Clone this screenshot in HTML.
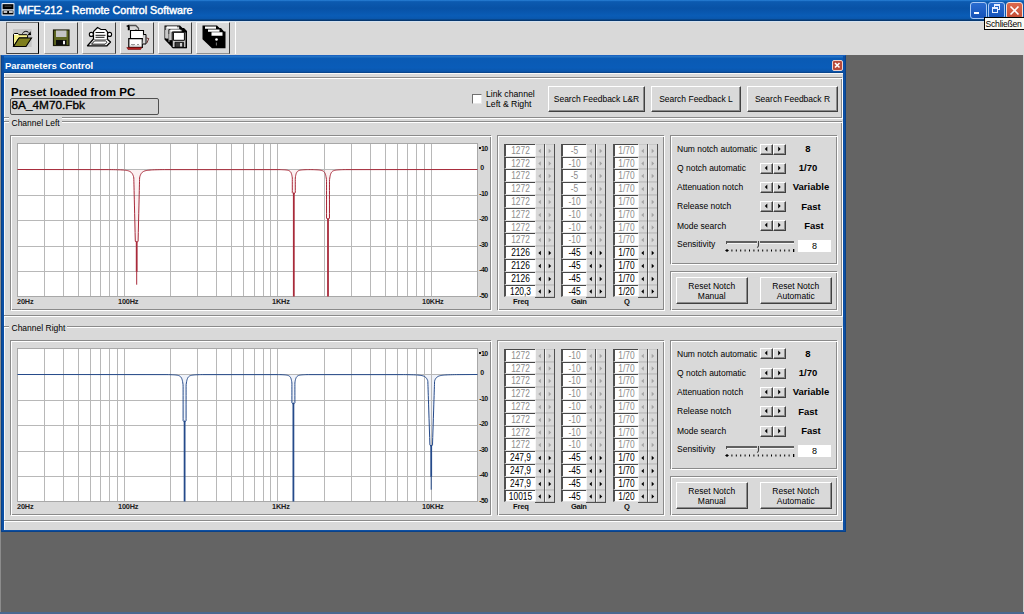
<!DOCTYPE html><html><head><meta charset="utf-8"><style>
html,body{margin:0;padding:0}
body{width:1024px;height:614px;position:relative;overflow:hidden;background:#646464;font-family:"Liberation Sans",sans-serif}
div{position:absolute}
.t{white-space:nowrap;line-height:1}
</style></head><body>
<div style="position:absolute;left:0px;top:0px;width:1024px;height:21px;background:linear-gradient(to bottom,#2a82d8 0%,#0c5ab0 8%,#0852a6 40%,#0a5cb6 75%,#0a58ae 88%,#063060 100%)"></div>
<div style="position:absolute;left:0px;top:21px;width:1024px;height:1px;background:#d4e2f0"></div>
<svg style="position:absolute;left:0px;top:0px" width="17" height="18"><rect x="1.5" y="3" width="13" height="12.8" rx="1" fill="#dce6f2"/><rect x="2.6" y="4.2" width="10.8" height="5" fill="#000"/><rect x="4.5" y="5.6" width="7" height="1.3" fill="#3a3a3a"/><rect x="2.6" y="10.6" width="10.8" height="3.8" fill="#000"/><rect x="3.6" y="11.2" width="3.6" height="1.6" fill="#f0f0f0"/><rect x="9" y="11.2" width="3.8" height="1.6" fill="#f0f0f0"/></svg>
<div class="t" style="left:18px;top:5.2px;font-size:10.75px;font-weight:normal;color:#fff;-webkit-text-stroke:0.45px #fff">MFE-212 - Remote Control Software</div>
<div style="position:absolute;left:970px;top:2px;width:17px;height:17px;background:linear-gradient(to bottom,#2a6cd0,#1452b8);border:1px solid #a8c8f4;border-radius:3px;box-sizing:border-box"></div>
<div style="position:absolute;left:974px;top:12px;width:5px;height:2px;background:#fff"></div>
<div style="position:absolute;left:988px;top:2px;width:17px;height:17px;background:linear-gradient(to bottom,#2a6cd0,#1452b8);border:1px solid #a8c8f4;border-radius:3px;box-sizing:border-box"></div>
<div style="position:absolute;left:994px;top:4px;width:6px;height:6px;border:1px solid #e8f0ff;border-top-width:2px;box-sizing:border-box"></div>
<div style="position:absolute;left:992px;top:7px;width:6px;height:6px;border:1px solid #e8f0ff;border-top-width:2px;box-sizing:border-box;background:#1c5cc0"></div>
<div style="position:absolute;left:1006px;top:2px;width:17px;height:17px;background:linear-gradient(to bottom,#dc6a4e,#c44c34);border:1px solid #f4e0d8;border-radius:3px;box-sizing:border-box"></div>
<svg style="position:absolute;left:1006px;top:2px" width="17" height="17"><path d="M4.5 4.5L12.5 12.5M12.5 4.5L4.5 12.5" stroke="#fff" stroke-width="1.6"/></svg>
<div style="position:absolute;left:0px;top:22px;width:1024px;height:33px;background:#d9d9d9"></div>
<div style="position:absolute;left:6px;top:22px;width:33px;height:32px;border-left:1px solid #707070;border-top:1px solid #707070;border-right:1px solid #000;border-bottom:1px solid #404040;box-sizing:border-box;background:#dcdcdc"></div>
<div style="position:absolute;left:44px;top:22px;width:34px;height:32px;border-left:1px solid #fff;border-top:1px solid #f4f4f4;border-right:1.5px solid #404040;border-bottom:1px solid #909090;box-sizing:border-box"></div>
<div style="position:absolute;left:82px;top:22px;width:34px;height:32px;border-left:1px solid #fff;border-top:1px solid #f4f4f4;border-right:1.5px solid #404040;border-bottom:1px solid #909090;box-sizing:border-box"></div>
<div style="position:absolute;left:120px;top:22px;width:34px;height:32px;border-left:1px solid #fff;border-top:1px solid #f4f4f4;border-right:1.5px solid #404040;border-bottom:1px solid #909090;box-sizing:border-box"></div>
<div style="position:absolute;left:158px;top:22px;width:34px;height:32px;border-left:1px solid #fff;border-top:1px solid #f4f4f4;border-right:1.5px solid #404040;border-bottom:1px solid #909090;box-sizing:border-box"></div>
<div style="position:absolute;left:196px;top:22px;width:34px;height:32px;border-left:1px solid #fff;border-top:1px solid #f4f4f4;border-right:1.5px solid #404040;border-bottom:1px solid #909090;box-sizing:border-box"></div>
<div style="position:absolute;left:235px;top:22px;width:6px;height:32px;border-left:1px solid #fff;box-sizing:border-box"></div>
<svg style="position:absolute;left:8px;top:24px" width="32" height="30" viewBox="0 0 32 30"><rect x="5" y="5" width="18.7" height="18" fill="#c6c6c6"/><path d="M5.5 22.5V10.3l1-0.8h3.5l1 1.2h7.8l0.8 1v2.2H11z" fill="#f6f08a" stroke="#000" stroke-width="1"/><path d="M5.5 22.5l5.5-8.5h12.5l-5.5 8.5z" fill="#7e7e1e" stroke="#000" stroke-width="1.1"/><path d="M6 10.5h4" stroke="#fff" stroke-width="1"/><path d="M14.2 9.6q3-3.8 6.3-1.3" fill="none" stroke="#000" stroke-width="1"/><path d="M19.3 11.3l3.8-0.2l-0.6-3.9z" fill="#000"/></svg>
<svg style="position:absolute;left:48px;top:24px" width="32" height="30" viewBox="0 0 32 30"><rect x="5.5" y="6" width="15.5" height="15.5" fill="#5e6620" stroke="#1a1a0a" stroke-width="1.2"/><rect x="8" y="6.5" width="10.5" height="6.5" fill="#c4c4c4"/><rect x="8" y="16" width="10.5" height="5" fill="#0c0c0c"/><rect x="15" y="16.8" width="2" height="3.5" fill="#f0f0f0"/></svg>
<svg style="position:absolute;left:84px;top:24px" width="32" height="30" viewBox="0 0 32 30"><path d="M3.5 21.8L9.5 15h13.5l3.5 3l-3.5 3.8z" fill="#fff" stroke="#000" stroke-width="1.3" stroke-linejoin="round"/><path d="M7.5 20.2l3-3.3h11l1.5 1.4l-1.8 1.9z" fill="none" stroke="#000" stroke-width="0.9"/><path d="M9.5 15.5V7.5l4-4l3.5 2h4.5l2 2.5v7.5" fill="#fff" stroke="#000" stroke-width="1.2"/><circle cx="7.3" cy="10.4" r="2" fill="#fff" stroke="#000" stroke-width="1.1"/><circle cx="25.6" cy="10.4" r="2" fill="#fff" stroke="#000" stroke-width="1.1"/><path d="M11.5 8.5h9M11.5 11.3h10M11.5 13.3h9" stroke="#000" stroke-width="0.9"/></svg>
<svg style="position:absolute;left:122px;top:22px" width="32" height="30" viewBox="0 0 32 30"><path d="M4 4l2.5-1.2h1.2v5.5H5.8V5z" fill="#000"/><path d="M7.5 3.5h6.3l2.7 2.7v3" fill="none" stroke="#505050" stroke-width="1.3"/><path d="M13 8.3q2-1 2 0.6t-1.5 1.2" fill="none" stroke="#000" stroke-width="0.9"/><path d="M8.5 8.5h13v8.5h-13z" fill="#fff" stroke="#000" stroke-width="1.1"/><path d="M6.8 16.7h13.5v8.6H6.8z" fill="#fff" stroke="#000" stroke-width="1.2"/><path d="M21.3 12.5h2.7v9.5h-3.5" fill="#d8d8d8" stroke="#000" stroke-width="1"/><path d="M24.5 16l2.3 0.6l-2 4.5" fill="none" stroke="#602020" stroke-width="0.9"/><path d="M9 23.5l1-1.5 1 1.5 1-1.5 1 1.5M15 23.5l1-1.5 1 1.5" fill="none" stroke="#707070" stroke-width="0.8"/><path d="M4.8 25.5h15l-1.2 2H6z" fill="#b42020" stroke="#701010" stroke-width="0.6"/></svg>
<svg style="position:absolute;left:160px;top:22px" width="32" height="30" viewBox="0 0 32 30"><path d="M4.5 3.5h15.5l2.5 2.5h1.5l3 3v17.3h-14l-8.5-8.8z" fill="#000"/><path d="M5.6 4.6h13.6v12H5.6z" fill="#c8c8c8"/><path d="M7 4.4h10v2H7z" fill="#fff"/><path d="M8.8 7.6h13.3v11H8.8z" fill="#c8c8c8" stroke="#000" stroke-width="0.8"/><path d="M10.4 7.5h10v2h-10z" fill="#fff"/><path d="M12.2 10h13.8v15.6H12.2z" fill="#cacaca" stroke="#000" stroke-width="1"/><path d="M13.4 10.3h11v8h-11z" fill="#fff" stroke="#000" stroke-width="1"/><path d="M15 20.3h8.6v5H15z" fill="#3a3a3a" stroke="#000" stroke-width="0.8"/><path d="M20 21h2v3.5h-2z" fill="#d0d0d0"/><path d="M5.5 8v8M9 12v8" stroke="#fff" stroke-width="0.8" opacity="0.7"/></svg>
<svg style="position:absolute;left:198px;top:22px" width="32" height="30" viewBox="0 0 32 30"><path d="M4.5 3.5h14.5l2.5 2.5h1.5l3 3.5h1.5v16.8h-13.5l-9.5-9z" fill="#000"/><path d="M7 4.6h11v2.2H7zM10 7.5h11.5v2.3H10zM13.5 10.2h11v3.6h-11z" fill="#fff"/><circle cx="18.5" cy="17.5" r="1.3" fill="#fff"/><path d="M18.4 20.5v3" stroke="#aaa" stroke-width="0.7"/></svg>
<div style="position:absolute;left:0px;top:55px;width:1.3px;height:557px;background:#8c8c8c"></div>
<div style="position:absolute;left:1022.6px;top:55px;width:1.4px;height:557px;background:#d0d0d0"></div>
<div style="position:absolute;left:0px;top:611.7px;width:1024px;height:2.3px;background:#4a6890"></div>
<div style="position:absolute;left:1px;top:55px;width:845px;height:477px;background:#0c4fa4;border:1px solid #0a4288;border-top-color:#1a62c0;box-sizing:border-box"></div>
<div style="position:absolute;left:4px;top:56px;width:839px;height:17px;background:linear-gradient(to bottom,#2a78c8 0%,#0a5ab4 15%,#0a5cb8 70%,#0a56ac 90%,#083e80 100%)"></div>
<div class="t" style="left:5px;top:60.5px;font-size:9.5px;font-weight:bold;color:#fff;">Parameters Control</div>
<div style="position:absolute;left:832px;top:60px;width:10.5px;height:10.5px;background:#b84a3a;border:1px solid #ecd4d0;border-radius:2px;box-sizing:border-box"></div>
<svg style="position:absolute;left:832px;top:60px" width="11" height="11"><path d="M3 3L7.5 7.5M7.5 3L3 7.5" stroke="#fff" stroke-width="1.6"/></svg>
<div style="position:absolute;left:4px;top:73px;width:839px;height:457px;background:#d9d9d9;border-top:1px solid #f8f8f8;border-left:1px solid #f8f8f8;box-sizing:border-box"></div>
<div style="position:absolute;left:4px;top:77px;width:838px;height:41px;border:1px solid #8a8a8a;border-left:none;box-sizing:border-box"></div>
<div style="position:absolute;left:4px;top:78px;width:839px;height:41px;border:1px solid #fff;border-left:none;box-sizing:border-box"></div>
<div class="t" style="left:11px;top:86px;font-size:11.6px;font-weight:bold;color:#000;">Preset loaded from PC</div>
<div style="position:absolute;left:10px;top:98px;width:149px;height:17px;border:1px solid #505050;border-radius:2px;box-sizing:border-box;background:#d4d4d4"></div>
<div class="t" style="left:11.5px;top:99.8px;font-size:11.8px;font-weight:normal;color:#000;-webkit-text-stroke:0.35px #000">8A_4M70.Fbk</div>
<div style="position:absolute;left:472px;top:94px;width:10px;height:10px;background:#fff;border-top:1px solid #707070;border-left:1px solid #707070;border-bottom:1px solid #e8e8e8;border-right:1px solid #e8e8e8;box-sizing:border-box"></div>
<div class="t" style="left:486px;top:89.5px;font-size:8.7px;font-weight:normal;color:#000;">Link channel</div>
<div class="t" style="left:486px;top:99.5px;font-size:8.7px;font-weight:normal;color:#000;">Left &amp; Right</div>
<div style="position:absolute;left:548px;top:86px;width:97px;height:26px;background:#d9d9d9;border-top:1px solid #fff;border-left:1px solid #fff;border-right:1px solid #404040;border-bottom:1px solid #404040;box-sizing:border-box"><div style="position:absolute;left:0;top:0;right:0;bottom:0;border-right:1px solid #8c8c8c;border-bottom:1px solid #8c8c8c"></div></div>
<div class="t" style="left:548px;top:94.5px;width:97px;text-align:center;font-size:8.5px">Search Feedback L&amp;R</div>
<div style="position:absolute;left:651px;top:86px;width:90px;height:26px;background:#d9d9d9;border-top:1px solid #fff;border-left:1px solid #fff;border-right:1px solid #404040;border-bottom:1px solid #404040;box-sizing:border-box"><div style="position:absolute;left:0;top:0;right:0;bottom:0;border-right:1px solid #8c8c8c;border-bottom:1px solid #8c8c8c"></div></div>
<div class="t" style="left:651px;top:94.5px;width:90px;text-align:center;font-size:8.5px">Search Feedback L</div>
<div style="position:absolute;left:747px;top:86px;width:91px;height:26px;background:#d9d9d9;border-top:1px solid #fff;border-left:1px solid #fff;border-right:1px solid #404040;border-bottom:1px solid #404040;box-sizing:border-box"><div style="position:absolute;left:0;top:0;right:0;bottom:0;border-right:1px solid #8c8c8c;border-bottom:1px solid #8c8c8c"></div></div>
<div class="t" style="left:747px;top:94.5px;width:91px;text-align:center;font-size:8.5px">Search Feedback R</div>
<div style="position:absolute;left:4px;top:121px;width:838px;height:195px;border:1px solid #8a8a8a;border-left:none;box-sizing:border-box"></div>
<div style="position:absolute;left:4px;top:122px;width:839px;height:195px;border:1px solid #fff;border-left:none;box-sizing:border-box"></div>
<div style="position:absolute;left:9px;top:116px;width:53px;height:10px;background:#d9d9d9"></div>
<div class="t" style="left:11.5px;top:118.5px;font-size:8.5px;font-weight:normal;color:#000;">Channel Left</div>
<div style="position:absolute;left:10px;top:135px;width:481px;height:175px;border:1px solid #8a8a8a;box-sizing:border-box"></div>
<div style="position:absolute;left:11px;top:136px;width:481px;height:175px;border:1px solid #fff;box-sizing:border-box"></div>
<svg style="position:absolute;left:17px;top:143px" width="461" height="154"><rect x="0" y="0" width="461" height="154" fill="#fff"/><polygon points="293.34,26.63 294.89,26.65 296.30,26.68 297.60,26.72 298.78,26.77 299.85,26.82 300.84,26.88 301.74,26.96 302.57,27.05 303.32,27.16 304.01,27.29 304.64,27.45 305.22,27.64 305.75,27.87 306.24,28.14 306.69,28.47 307.10,28.87 307.48,29.34 307.83,29.91 308.15,30.59 308.45,31.41 308.73,32.39 308.98,33.57 309.22,34.98 309.45,36.68 309.50,38.71 309.50,41.15 309.50,44.08 309.50,47.60 309.50,51.82 309.50,56.88 309.50,62.96 309.50,70.25 309.50,75.14 311.00,76.64 312.50,75.14 312.50,70.25 312.50,62.96 312.50,56.88 312.50,51.82 312.50,47.60 312.50,44.08 312.50,41.15 312.50,38.71 312.55,36.68 312.78,34.98 313.02,33.57 313.27,32.39 313.55,31.41 313.85,30.59 314.17,29.91 314.52,29.34 314.90,28.87 315.31,28.47 315.76,28.14 316.25,27.87 316.78,27.64 317.36,27.45 317.99,27.29 318.68,27.16 319.43,27.05 320.26,26.96 321.16,26.88 322.15,26.82 323.22,26.77 324.40,26.72 325.70,26.68 327.11,26.65 328.66,26.63" fill="#fcf0f1" stroke="none"/><polygon points="261.93,26.63 263.23,26.65 264.43,26.68 265.51,26.72 266.51,26.77 267.41,26.82 268.24,26.88 269.00,26.96 269.70,27.05 270.33,27.16 270.91,27.29 271.45,27.45 271.93,27.64 272.38,27.87 272.79,28.14 273.17,28.47 273.51,28.87 273.83,29.34 274.13,29.91 274.40,30.59 274.65,31.41 274.89,32.39 275.10,33.57 275.30,34.98 275.30,36.68 275.30,38.71 275.30,41.15 275.30,44.08 275.30,47.60 275.30,49.54 276.80,51.04 278.30,49.54 278.30,47.60 278.30,44.08 278.30,41.15 278.30,38.71 278.30,36.68 278.30,34.98 278.50,33.57 278.71,32.39 278.95,31.41 279.20,30.59 279.47,29.91 279.77,29.34 280.09,28.87 280.43,28.47 280.81,28.14 281.22,27.87 281.67,27.64 282.15,27.45 282.69,27.29 283.27,27.16 283.90,27.05 284.60,26.96 285.36,26.88 286.19,26.82 287.09,26.77 288.09,26.72 289.17,26.68 290.37,26.65 291.67,26.63" fill="#fcf0f1" stroke="none"/><polygon points="91.82,26.63 94.26,26.65 96.50,26.68 98.54,26.72 100.40,26.77 102.10,26.82 103.66,26.88 105.08,26.96 106.38,27.05 107.57,27.16 108.66,27.29 109.66,27.45 110.58,27.64 111.41,27.87 112.18,28.14 112.89,28.47 113.54,28.87 114.14,29.34 114.69,29.91 115.20,30.59 115.67,31.41 116.11,32.39 116.52,33.57 116.80,34.98 116.84,36.68 116.89,38.71 116.95,41.15 117.02,44.08 117.10,47.60 117.20,51.82 117.32,56.88 117.46,62.96 117.64,70.25 117.85,79.00 118.09,89.50 118.30,98.18 119.70,99.68 121.10,98.18 121.31,89.50 121.55,79.00 121.76,70.25 121.94,62.96 122.08,56.88 122.20,51.82 122.30,47.60 122.38,44.08 122.45,41.15 122.51,38.71 122.56,36.68 122.60,34.98 122.88,33.57 123.29,32.39 123.73,31.41 124.20,30.59 124.71,29.91 125.26,29.34 125.86,28.87 126.51,28.47 127.22,28.14 127.99,27.87 128.82,27.64 129.74,27.45 130.74,27.29 131.83,27.16 133.02,27.05 134.32,26.96 135.74,26.88 137.30,26.82 139.00,26.77 140.86,26.72 142.90,26.68 145.14,26.65 147.58,26.63" fill="#fcf0f1" stroke="none"/><line x1="27.5" y1="0" x2="27.5" y2="154" stroke="#b8b8b8" stroke-width="1"/><line x1="46.5" y1="0" x2="46.5" y2="154" stroke="#b8b8b8" stroke-width="1"/><line x1="61.5" y1="0" x2="61.5" y2="154" stroke="#b8b8b8" stroke-width="1"/><line x1="73.5" y1="0" x2="73.5" y2="154" stroke="#b8b8b8" stroke-width="1"/><line x1="83.5" y1="0" x2="83.5" y2="154" stroke="#b8b8b8" stroke-width="1"/><line x1="92.5" y1="0" x2="92.5" y2="154" stroke="#b8b8b8" stroke-width="1"/><line x1="100.5" y1="0" x2="100.5" y2="154" stroke="#b8b8b8" stroke-width="1"/><line x1="107.5" y1="0" x2="107.5" y2="154" stroke="#b8b8b8" stroke-width="1"/><line x1="153.5" y1="0" x2="153.5" y2="154" stroke="#b8b8b8" stroke-width="1"/><line x1="180.5" y1="0" x2="180.5" y2="154" stroke="#b8b8b8" stroke-width="1"/><line x1="199.5" y1="0" x2="199.5" y2="154" stroke="#b8b8b8" stroke-width="1"/><line x1="214.5" y1="0" x2="214.5" y2="154" stroke="#b8b8b8" stroke-width="1"/><line x1="226.5" y1="0" x2="226.5" y2="154" stroke="#b8b8b8" stroke-width="1"/><line x1="237.5" y1="0" x2="237.5" y2="154" stroke="#b8b8b8" stroke-width="1"/><line x1="246.5" y1="0" x2="246.5" y2="154" stroke="#b8b8b8" stroke-width="1"/><line x1="253.5" y1="0" x2="253.5" y2="154" stroke="#b8b8b8" stroke-width="1"/><line x1="260.5" y1="0" x2="260.5" y2="154" stroke="#b8b8b8" stroke-width="1"/><line x1="307.5" y1="0" x2="307.5" y2="154" stroke="#b8b8b8" stroke-width="1"/><line x1="334.5" y1="0" x2="334.5" y2="154" stroke="#b8b8b8" stroke-width="1"/><line x1="353.5" y1="0" x2="353.5" y2="154" stroke="#b8b8b8" stroke-width="1"/><line x1="368.5" y1="0" x2="368.5" y2="154" stroke="#b8b8b8" stroke-width="1"/><line x1="380.5" y1="0" x2="380.5" y2="154" stroke="#b8b8b8" stroke-width="1"/><line x1="390.5" y1="0" x2="390.5" y2="154" stroke="#b8b8b8" stroke-width="1"/><line x1="399.5" y1="0" x2="399.5" y2="154" stroke="#b8b8b8" stroke-width="1"/><line x1="407.5" y1="0" x2="407.5" y2="154" stroke="#b8b8b8" stroke-width="1"/><line x1="414.5" y1="0" x2="414.5" y2="154" stroke="#b8b8b8" stroke-width="1"/><line x1="0" y1="52.5" x2="461" y2="52.5" stroke="#b8b8b8" stroke-width="1"/><line x1="0" y1="77.5" x2="461" y2="77.5" stroke="#b8b8b8" stroke-width="1"/><line x1="0" y1="103.5" x2="461" y2="103.5" stroke="#b8b8b8" stroke-width="1"/><line x1="0" y1="128.5" x2="461" y2="128.5" stroke="#b8b8b8" stroke-width="1"/><line x1="0" y1="26.5" x2="461" y2="26.5" stroke="#b8b8b8" stroke-width="1"/><rect x="0.5" y="0.5" width="460" height="153" fill="none" stroke="#a8a8a8"/><polyline points="0.5,26.5 91.82,26.63 94.26,26.65 96.50,26.68 98.54,26.72 100.40,26.77 102.10,26.82 103.66,26.88 105.08,26.96 106.38,27.05 107.57,27.16 108.66,27.29 109.66,27.45 110.58,27.64 111.41,27.87 112.18,28.14 112.89,28.47 113.54,28.87 114.14,29.34 114.69,29.91 115.20,30.59 115.67,31.41 116.11,32.39 116.52,33.57 116.80,34.98 116.84,36.68 116.89,38.71 116.95,41.15 117.02,44.08 117.10,47.60 117.20,51.82 117.32,56.88 117.46,62.96 117.64,70.25 117.85,79.00 118.09,89.50 118.30,98.18 119.70,99.68 121.10,98.18 121.31,89.50 121.55,79.00 121.76,70.25 121.94,62.96 122.08,56.88 122.20,51.82 122.30,47.60 122.38,44.08 122.45,41.15 122.51,38.71 122.56,36.68 122.60,34.98 122.88,33.57 123.29,32.39 123.73,31.41 124.20,30.59 124.71,29.91 125.26,29.34 125.86,28.87 126.51,28.47 127.22,28.14 127.99,27.87 128.82,27.64 129.74,27.45 130.74,27.29 131.83,27.16 133.02,27.05 134.32,26.96 135.74,26.88 137.30,26.82 139.00,26.77 140.86,26.72 142.90,26.68 145.14,26.65 147.58,26.63 261.93,26.63 263.23,26.65 264.43,26.68 265.51,26.72 266.51,26.77 267.41,26.82 268.24,26.88 269.00,26.96 269.70,27.05 270.33,27.16 270.91,27.29 271.45,27.45 271.93,27.64 272.38,27.87 272.79,28.14 273.17,28.47 273.51,28.87 273.83,29.34 274.13,29.91 274.40,30.59 274.65,31.41 274.89,32.39 275.10,33.57 275.30,34.98 275.30,36.68 275.30,38.71 275.30,41.15 275.30,44.08 275.30,47.60 275.30,49.54 276.80,51.04 278.30,49.54 278.30,47.60 278.30,44.08 278.30,41.15 278.30,38.71 278.30,36.68 278.30,34.98 278.50,33.57 278.71,32.39 278.95,31.41 279.20,30.59 279.47,29.91 279.77,29.34 280.09,28.87 280.43,28.47 280.81,28.14 281.22,27.87 281.67,27.64 282.15,27.45 282.69,27.29 283.27,27.16 283.90,27.05 284.60,26.96 285.36,26.88 286.19,26.82 287.09,26.77 288.09,26.72 289.17,26.68 290.37,26.65 291.67,26.63 293.34,26.63 294.89,26.65 296.30,26.68 297.60,26.72 298.78,26.77 299.85,26.82 300.84,26.88 301.74,26.96 302.57,27.05 303.32,27.16 304.01,27.29 304.64,27.45 305.22,27.64 305.75,27.87 306.24,28.14 306.69,28.47 307.10,28.87 307.48,29.34 307.83,29.91 308.15,30.59 308.45,31.41 308.73,32.39 308.98,33.57 309.22,34.98 309.45,36.68 309.50,38.71 309.50,41.15 309.50,44.08 309.50,47.60 309.50,51.82 309.50,56.88 309.50,62.96 309.50,70.25 309.50,75.14 311.00,76.64 312.50,75.14 312.50,70.25 312.50,62.96 312.50,56.88 312.50,51.82 312.50,47.60 312.50,44.08 312.50,41.15 312.50,38.71 312.55,36.68 312.78,34.98 313.02,33.57 313.27,32.39 313.55,31.41 313.85,30.59 314.17,29.91 314.52,29.34 314.90,28.87 315.31,28.47 315.76,28.14 316.25,27.87 316.78,27.64 317.36,27.45 317.99,27.29 318.68,27.16 319.43,27.05 320.26,26.96 321.16,26.88 322.15,26.82 323.22,26.77 324.40,26.72 325.70,26.68 327.11,26.65 328.66,26.63 460.5,26.5" fill="none" stroke="#a82a3a" stroke-width="1"/><line x1="119.70" y1="98.18" x2="119.70" y2="128.90" stroke="#a82a3a" stroke-width="1.8"/><line x1="119.70" y1="128.90" x2="119.70" y2="141.70" stroke="#a82a3a" stroke-width="1"/><line x1="276.80" y1="49.54" x2="276.80" y2="153.50" stroke="#a82a3a" stroke-width="1.8"/><line x1="311.00" y1="75.14" x2="311.00" y2="153.50" stroke="#a82a3a" stroke-width="1.8"/></svg>
<div class="t" style="left:17px;top:298px;font-size:7.3px;font-weight:bold;color:#222;letter-spacing:-0.15px">20Hz</div>
<div class="t" style="left:118px;top:298px;font-size:7.3px;font-weight:bold;color:#222;letter-spacing:-0.15px">100Hz</div>
<div class="t" style="left:272px;top:298px;font-size:7.3px;font-weight:bold;color:#222;letter-spacing:-0.15px">1KHz</div>
<div class="t" style="left:422px;top:298px;font-size:7.3px;font-weight:bold;color:#222;letter-spacing:-0.15px">10KHz</div>
<div style="position:absolute;left:479.3px;top:147.2px;width:1.6px;height:1.6px;background:#111"></div>
<div class="t" style="left:481px;top:144.7px;font-size:7px;font-weight:bold;color:#111;letter-spacing:-0.6px">10</div>
<div class="t" style="left:480.3px;top:164px;font-size:7px;font-weight:bold;color:#111;letter-spacing:-0.6px">0</div>
<div class="t" style="left:479.2px;top:190px;font-size:7px;font-weight:bold;color:#111;letter-spacing:-0.6px">-10</div>
<div class="t" style="left:479.2px;top:215px;font-size:7px;font-weight:bold;color:#111;letter-spacing:-0.6px">-20</div>
<div class="t" style="left:479.2px;top:241px;font-size:7px;font-weight:bold;color:#111;letter-spacing:-0.6px">-30</div>
<div class="t" style="left:479.2px;top:266px;font-size:7px;font-weight:bold;color:#111;letter-spacing:-0.6px">-40</div>
<div class="t" style="left:479.2px;top:292px;font-size:7px;font-weight:bold;color:#111;letter-spacing:-0.6px">-50</div>
<div style="position:absolute;left:497px;top:135px;width:167px;height:175px;border:1px solid #8a8a8a;box-sizing:border-box"></div>
<div style="position:absolute;left:498px;top:136px;width:167px;height:175px;border:1px solid #fff;box-sizing:border-box"></div>
<div style="position:absolute;left:504px;top:144px;width:31px;height:13px;background:#fff;border-top:1.5px solid #484848;border-left:2px solid #505050;border-bottom:1px solid #e4e4e4;box-sizing:border-box"></div>
<div class="t" style="left:504.5px;top:145.5px;width:31px;text-align:center;font-size:10px;color:#8c8c8c;transform:scaleX(0.84)">1272</div>
<div style="position:absolute;left:535px;top:144px;width:9px;height:13px;background:#d9d9d9;border-top:1px solid #c8c8c8;border-left:1px solid #f6f6f6;border-bottom:1px solid #c4c4c4;box-sizing:border-box"></div>
<div style="position:absolute;left:544px;top:144px;width:1px;height:13px;background:#505050"></div>
<svg style="position:absolute;left:535px;top:144px" width="9" height="13"><path d="M5.8 4.7L3.3 7.0L5.8 9.3z" fill="#a4a4a4"/></svg>
<div style="position:absolute;left:545px;top:144px;width:9px;height:13px;background:#d9d9d9;border-top:1px solid #c8c8c8;border-left:1px solid #f6f6f6;border-bottom:1px solid #c4c4c4;box-sizing:border-box"></div>
<div style="position:absolute;left:554px;top:144px;width:1px;height:13px;background:#505050"></div>
<svg style="position:absolute;left:545px;top:144px" width="9" height="13"><path d="M3.7 4.7L6.2 7.0L3.7 9.3z" fill="#a4a4a4"/></svg>
<div style="position:absolute;left:504px;top:157px;width:31px;height:12px;background:#fff;border-top:1.5px solid #484848;border-left:2px solid #505050;border-bottom:1px solid #e4e4e4;box-sizing:border-box"></div>
<div class="t" style="left:504.5px;top:158.5px;width:31px;text-align:center;font-size:10px;color:#8c8c8c;transform:scaleX(0.84)">1272</div>
<div style="position:absolute;left:535px;top:157px;width:9px;height:12px;background:#d9d9d9;border-top:1px solid #c8c8c8;border-left:1px solid #f6f6f6;border-bottom:1px solid #c4c4c4;box-sizing:border-box"></div>
<div style="position:absolute;left:544px;top:157px;width:1px;height:12px;background:#505050"></div>
<svg style="position:absolute;left:535px;top:157px" width="9" height="12"><path d="M5.8 4.2L3.3 6.5L5.8 8.8z" fill="#a4a4a4"/></svg>
<div style="position:absolute;left:545px;top:157px;width:9px;height:12px;background:#d9d9d9;border-top:1px solid #c8c8c8;border-left:1px solid #f6f6f6;border-bottom:1px solid #c4c4c4;box-sizing:border-box"></div>
<div style="position:absolute;left:554px;top:157px;width:1px;height:12px;background:#505050"></div>
<svg style="position:absolute;left:545px;top:157px" width="9" height="12"><path d="M3.7 4.2L6.2 6.5L3.7 8.8z" fill="#a4a4a4"/></svg>
<div style="position:absolute;left:504px;top:169px;width:31px;height:13px;background:#fff;border-top:1.5px solid #484848;border-left:2px solid #505050;border-bottom:1px solid #e4e4e4;box-sizing:border-box"></div>
<div class="t" style="left:504.5px;top:170.5px;width:31px;text-align:center;font-size:10px;color:#8c8c8c;transform:scaleX(0.84)">1272</div>
<div style="position:absolute;left:535px;top:169px;width:9px;height:13px;background:#d9d9d9;border-top:1px solid #c8c8c8;border-left:1px solid #f6f6f6;border-bottom:1px solid #c4c4c4;box-sizing:border-box"></div>
<div style="position:absolute;left:544px;top:169px;width:1px;height:13px;background:#505050"></div>
<svg style="position:absolute;left:535px;top:169px" width="9" height="13"><path d="M5.8 4.7L3.3 7.0L5.8 9.3z" fill="#a4a4a4"/></svg>
<div style="position:absolute;left:545px;top:169px;width:9px;height:13px;background:#d9d9d9;border-top:1px solid #c8c8c8;border-left:1px solid #f6f6f6;border-bottom:1px solid #c4c4c4;box-sizing:border-box"></div>
<div style="position:absolute;left:554px;top:169px;width:1px;height:13px;background:#505050"></div>
<svg style="position:absolute;left:545px;top:169px" width="9" height="13"><path d="M3.7 4.7L6.2 7.0L3.7 9.3z" fill="#a4a4a4"/></svg>
<div style="position:absolute;left:504px;top:182px;width:31px;height:13px;background:#fff;border-top:1.5px solid #484848;border-left:2px solid #505050;border-bottom:1px solid #e4e4e4;box-sizing:border-box"></div>
<div class="t" style="left:504.5px;top:183.5px;width:31px;text-align:center;font-size:10px;color:#8c8c8c;transform:scaleX(0.84)">1272</div>
<div style="position:absolute;left:535px;top:182px;width:9px;height:13px;background:#d9d9d9;border-top:1px solid #c8c8c8;border-left:1px solid #f6f6f6;border-bottom:1px solid #c4c4c4;box-sizing:border-box"></div>
<div style="position:absolute;left:544px;top:182px;width:1px;height:13px;background:#505050"></div>
<svg style="position:absolute;left:535px;top:182px" width="9" height="13"><path d="M5.8 4.7L3.3 7.0L5.8 9.3z" fill="#a4a4a4"/></svg>
<div style="position:absolute;left:545px;top:182px;width:9px;height:13px;background:#d9d9d9;border-top:1px solid #c8c8c8;border-left:1px solid #f6f6f6;border-bottom:1px solid #c4c4c4;box-sizing:border-box"></div>
<div style="position:absolute;left:554px;top:182px;width:1px;height:13px;background:#505050"></div>
<svg style="position:absolute;left:545px;top:182px" width="9" height="13"><path d="M3.7 4.7L6.2 7.0L3.7 9.3z" fill="#a4a4a4"/></svg>
<div style="position:absolute;left:504px;top:195px;width:31px;height:13px;background:#fff;border-top:1.5px solid #484848;border-left:2px solid #505050;border-bottom:1px solid #e4e4e4;box-sizing:border-box"></div>
<div class="t" style="left:504.5px;top:196.5px;width:31px;text-align:center;font-size:10px;color:#8c8c8c;transform:scaleX(0.84)">1272</div>
<div style="position:absolute;left:535px;top:195px;width:9px;height:13px;background:#d9d9d9;border-top:1px solid #c8c8c8;border-left:1px solid #f6f6f6;border-bottom:1px solid #c4c4c4;box-sizing:border-box"></div>
<div style="position:absolute;left:544px;top:195px;width:1px;height:13px;background:#505050"></div>
<svg style="position:absolute;left:535px;top:195px" width="9" height="13"><path d="M5.8 4.7L3.3 7.0L5.8 9.3z" fill="#a4a4a4"/></svg>
<div style="position:absolute;left:545px;top:195px;width:9px;height:13px;background:#d9d9d9;border-top:1px solid #c8c8c8;border-left:1px solid #f6f6f6;border-bottom:1px solid #c4c4c4;box-sizing:border-box"></div>
<div style="position:absolute;left:554px;top:195px;width:1px;height:13px;background:#505050"></div>
<svg style="position:absolute;left:545px;top:195px" width="9" height="13"><path d="M3.7 4.7L6.2 7.0L3.7 9.3z" fill="#a4a4a4"/></svg>
<div style="position:absolute;left:504px;top:208px;width:31px;height:13px;background:#fff;border-top:1.5px solid #484848;border-left:2px solid #505050;border-bottom:1px solid #e4e4e4;box-sizing:border-box"></div>
<div class="t" style="left:504.5px;top:209.5px;width:31px;text-align:center;font-size:10px;color:#8c8c8c;transform:scaleX(0.84)">1272</div>
<div style="position:absolute;left:535px;top:208px;width:9px;height:13px;background:#d9d9d9;border-top:1px solid #c8c8c8;border-left:1px solid #f6f6f6;border-bottom:1px solid #c4c4c4;box-sizing:border-box"></div>
<div style="position:absolute;left:544px;top:208px;width:1px;height:13px;background:#505050"></div>
<svg style="position:absolute;left:535px;top:208px" width="9" height="13"><path d="M5.8 4.7L3.3 7.0L5.8 9.3z" fill="#a4a4a4"/></svg>
<div style="position:absolute;left:545px;top:208px;width:9px;height:13px;background:#d9d9d9;border-top:1px solid #c8c8c8;border-left:1px solid #f6f6f6;border-bottom:1px solid #c4c4c4;box-sizing:border-box"></div>
<div style="position:absolute;left:554px;top:208px;width:1px;height:13px;background:#505050"></div>
<svg style="position:absolute;left:545px;top:208px" width="9" height="13"><path d="M3.7 4.7L6.2 7.0L3.7 9.3z" fill="#a4a4a4"/></svg>
<div style="position:absolute;left:504px;top:221px;width:31px;height:12px;background:#fff;border-top:1.5px solid #484848;border-left:2px solid #505050;border-bottom:1px solid #e4e4e4;box-sizing:border-box"></div>
<div class="t" style="left:504.5px;top:222.5px;width:31px;text-align:center;font-size:10px;color:#8c8c8c;transform:scaleX(0.84)">1272</div>
<div style="position:absolute;left:535px;top:221px;width:9px;height:12px;background:#d9d9d9;border-top:1px solid #c8c8c8;border-left:1px solid #f6f6f6;border-bottom:1px solid #c4c4c4;box-sizing:border-box"></div>
<div style="position:absolute;left:544px;top:221px;width:1px;height:12px;background:#505050"></div>
<svg style="position:absolute;left:535px;top:221px" width="9" height="12"><path d="M5.8 4.2L3.3 6.5L5.8 8.8z" fill="#a4a4a4"/></svg>
<div style="position:absolute;left:545px;top:221px;width:9px;height:12px;background:#d9d9d9;border-top:1px solid #c8c8c8;border-left:1px solid #f6f6f6;border-bottom:1px solid #c4c4c4;box-sizing:border-box"></div>
<div style="position:absolute;left:554px;top:221px;width:1px;height:12px;background:#505050"></div>
<svg style="position:absolute;left:545px;top:221px" width="9" height="12"><path d="M3.7 4.2L6.2 6.5L3.7 8.8z" fill="#a4a4a4"/></svg>
<div style="position:absolute;left:504px;top:233px;width:31px;height:13px;background:#fff;border-top:1.5px solid #484848;border-left:2px solid #505050;border-bottom:1px solid #e4e4e4;box-sizing:border-box"></div>
<div class="t" style="left:504.5px;top:234.5px;width:31px;text-align:center;font-size:10px;color:#8c8c8c;transform:scaleX(0.84)">1272</div>
<div style="position:absolute;left:535px;top:233px;width:9px;height:13px;background:#d9d9d9;border-top:1px solid #c8c8c8;border-left:1px solid #f6f6f6;border-bottom:1px solid #c4c4c4;box-sizing:border-box"></div>
<div style="position:absolute;left:544px;top:233px;width:1px;height:13px;background:#505050"></div>
<svg style="position:absolute;left:535px;top:233px" width="9" height="13"><path d="M5.8 4.7L3.3 7.0L5.8 9.3z" fill="#a4a4a4"/></svg>
<div style="position:absolute;left:545px;top:233px;width:9px;height:13px;background:#d9d9d9;border-top:1px solid #c8c8c8;border-left:1px solid #f6f6f6;border-bottom:1px solid #c4c4c4;box-sizing:border-box"></div>
<div style="position:absolute;left:554px;top:233px;width:1px;height:13px;background:#505050"></div>
<svg style="position:absolute;left:545px;top:233px" width="9" height="13"><path d="M3.7 4.7L6.2 7.0L3.7 9.3z" fill="#a4a4a4"/></svg>
<div style="position:absolute;left:504px;top:246px;width:31px;height:13px;background:#fff;border-top:1.5px solid #484848;border-left:2px solid #505050;border-bottom:1px solid #e4e4e4;box-sizing:border-box"></div>
<div class="t" style="left:504.5px;top:247.5px;width:31px;text-align:center;font-size:10px;color:#000;transform:scaleX(0.84)">2126</div>
<div style="position:absolute;left:535px;top:246px;width:9px;height:13px;background:#d9d9d9;border-top:1px solid #c8c8c8;border-left:1px solid #f6f6f6;border-bottom:1px solid #c4c4c4;box-sizing:border-box"></div>
<div style="position:absolute;left:544px;top:246px;width:1px;height:13px;background:#505050"></div>
<svg style="position:absolute;left:535px;top:246px" width="9" height="13"><path d="M5.8 4.7L3.3 7.0L5.8 9.3z" fill="#000"/></svg>
<div style="position:absolute;left:545px;top:246px;width:9px;height:13px;background:#d9d9d9;border-top:1px solid #c8c8c8;border-left:1px solid #f6f6f6;border-bottom:1px solid #c4c4c4;box-sizing:border-box"></div>
<div style="position:absolute;left:554px;top:246px;width:1px;height:13px;background:#505050"></div>
<svg style="position:absolute;left:545px;top:246px" width="9" height="13"><path d="M3.7 4.7L6.2 7.0L3.7 9.3z" fill="#000"/></svg>
<div style="position:absolute;left:504px;top:259px;width:31px;height:13px;background:#fff;border-top:1.5px solid #484848;border-left:2px solid #505050;border-bottom:1px solid #e4e4e4;box-sizing:border-box"></div>
<div class="t" style="left:504.5px;top:260.5px;width:31px;text-align:center;font-size:10px;color:#000;transform:scaleX(0.84)">2126</div>
<div style="position:absolute;left:535px;top:259px;width:9px;height:13px;background:#d9d9d9;border-top:1px solid #c8c8c8;border-left:1px solid #f6f6f6;border-bottom:1px solid #c4c4c4;box-sizing:border-box"></div>
<div style="position:absolute;left:544px;top:259px;width:1px;height:13px;background:#505050"></div>
<svg style="position:absolute;left:535px;top:259px" width="9" height="13"><path d="M5.8 4.7L3.3 7.0L5.8 9.3z" fill="#000"/></svg>
<div style="position:absolute;left:545px;top:259px;width:9px;height:13px;background:#d9d9d9;border-top:1px solid #c8c8c8;border-left:1px solid #f6f6f6;border-bottom:1px solid #c4c4c4;box-sizing:border-box"></div>
<div style="position:absolute;left:554px;top:259px;width:1px;height:13px;background:#505050"></div>
<svg style="position:absolute;left:545px;top:259px" width="9" height="13"><path d="M3.7 4.7L6.2 7.0L3.7 9.3z" fill="#000"/></svg>
<div style="position:absolute;left:504px;top:272px;width:31px;height:13px;background:#fff;border-top:1.5px solid #484848;border-left:2px solid #505050;border-bottom:1px solid #e4e4e4;box-sizing:border-box"></div>
<div class="t" style="left:504.5px;top:273.5px;width:31px;text-align:center;font-size:10px;color:#000;transform:scaleX(0.84)">2126</div>
<div style="position:absolute;left:535px;top:272px;width:9px;height:13px;background:#d9d9d9;border-top:1px solid #c8c8c8;border-left:1px solid #f6f6f6;border-bottom:1px solid #c4c4c4;box-sizing:border-box"></div>
<div style="position:absolute;left:544px;top:272px;width:1px;height:13px;background:#505050"></div>
<svg style="position:absolute;left:535px;top:272px" width="9" height="13"><path d="M5.8 4.7L3.3 7.0L5.8 9.3z" fill="#000"/></svg>
<div style="position:absolute;left:545px;top:272px;width:9px;height:13px;background:#d9d9d9;border-top:1px solid #c8c8c8;border-left:1px solid #f6f6f6;border-bottom:1px solid #c4c4c4;box-sizing:border-box"></div>
<div style="position:absolute;left:554px;top:272px;width:1px;height:13px;background:#505050"></div>
<svg style="position:absolute;left:545px;top:272px" width="9" height="13"><path d="M3.7 4.7L6.2 7.0L3.7 9.3z" fill="#000"/></svg>
<div style="position:absolute;left:504px;top:285px;width:31px;height:12px;background:#fff;border-top:1.5px solid #484848;border-left:2px solid #505050;border-bottom:1px solid #e4e4e4;box-sizing:border-box"></div>
<div class="t" style="left:504.5px;top:286.5px;width:31px;text-align:center;font-size:10px;color:#000;transform:scaleX(0.84)">120,3</div>
<div style="position:absolute;left:535px;top:285px;width:9px;height:12px;background:#d9d9d9;border-top:1px solid #c8c8c8;border-left:1px solid #f6f6f6;border-bottom:1px solid #c4c4c4;box-sizing:border-box"></div>
<div style="position:absolute;left:544px;top:285px;width:1px;height:12px;background:#505050"></div>
<svg style="position:absolute;left:535px;top:285px" width="9" height="12"><path d="M5.8 4.2L3.3 6.5L5.8 8.8z" fill="#000"/></svg>
<div style="position:absolute;left:545px;top:285px;width:9px;height:12px;background:#d9d9d9;border-top:1px solid #c8c8c8;border-left:1px solid #f6f6f6;border-bottom:1px solid #c4c4c4;box-sizing:border-box"></div>
<div style="position:absolute;left:554px;top:285px;width:1px;height:12px;background:#505050"></div>
<svg style="position:absolute;left:545px;top:285px" width="9" height="12"><path d="M3.7 4.2L6.2 6.5L3.7 8.8z" fill="#000"/></svg>
<div style="position:absolute;left:535px;top:297px;width:20px;height:1px;background:#505050"></div>
<div style="position:absolute;left:561px;top:144px;width:25px;height:13px;background:#fff;border-top:1.5px solid #484848;border-left:2px solid #505050;border-bottom:1px solid #e4e4e4;box-sizing:border-box"></div>
<div class="t" style="left:561.5px;top:145.5px;width:25px;text-align:center;font-size:10px;color:#8c8c8c;transform:scaleX(0.84)">-5</div>
<div style="position:absolute;left:586px;top:144px;width:9px;height:13px;background:#d9d9d9;border-top:1px solid #c8c8c8;border-left:1px solid #f6f6f6;border-bottom:1px solid #c4c4c4;box-sizing:border-box"></div>
<div style="position:absolute;left:595px;top:144px;width:1px;height:13px;background:#505050"></div>
<svg style="position:absolute;left:586px;top:144px" width="9" height="13"><path d="M5.8 4.7L3.3 7.0L5.8 9.3z" fill="#a4a4a4"/></svg>
<div style="position:absolute;left:596px;top:144px;width:9px;height:13px;background:#d9d9d9;border-top:1px solid #c8c8c8;border-left:1px solid #f6f6f6;border-bottom:1px solid #c4c4c4;box-sizing:border-box"></div>
<div style="position:absolute;left:605px;top:144px;width:1px;height:13px;background:#505050"></div>
<svg style="position:absolute;left:596px;top:144px" width="9" height="13"><path d="M3.7 4.7L6.2 7.0L3.7 9.3z" fill="#a4a4a4"/></svg>
<div style="position:absolute;left:561px;top:157px;width:25px;height:12px;background:#fff;border-top:1.5px solid #484848;border-left:2px solid #505050;border-bottom:1px solid #e4e4e4;box-sizing:border-box"></div>
<div class="t" style="left:561.5px;top:158.5px;width:25px;text-align:center;font-size:10px;color:#8c8c8c;transform:scaleX(0.84)">-10</div>
<div style="position:absolute;left:586px;top:157px;width:9px;height:12px;background:#d9d9d9;border-top:1px solid #c8c8c8;border-left:1px solid #f6f6f6;border-bottom:1px solid #c4c4c4;box-sizing:border-box"></div>
<div style="position:absolute;left:595px;top:157px;width:1px;height:12px;background:#505050"></div>
<svg style="position:absolute;left:586px;top:157px" width="9" height="12"><path d="M5.8 4.2L3.3 6.5L5.8 8.8z" fill="#a4a4a4"/></svg>
<div style="position:absolute;left:596px;top:157px;width:9px;height:12px;background:#d9d9d9;border-top:1px solid #c8c8c8;border-left:1px solid #f6f6f6;border-bottom:1px solid #c4c4c4;box-sizing:border-box"></div>
<div style="position:absolute;left:605px;top:157px;width:1px;height:12px;background:#505050"></div>
<svg style="position:absolute;left:596px;top:157px" width="9" height="12"><path d="M3.7 4.2L6.2 6.5L3.7 8.8z" fill="#a4a4a4"/></svg>
<div style="position:absolute;left:561px;top:169px;width:25px;height:13px;background:#fff;border-top:1.5px solid #484848;border-left:2px solid #505050;border-bottom:1px solid #e4e4e4;box-sizing:border-box"></div>
<div class="t" style="left:561.5px;top:170.5px;width:25px;text-align:center;font-size:10px;color:#8c8c8c;transform:scaleX(0.84)">-5</div>
<div style="position:absolute;left:586px;top:169px;width:9px;height:13px;background:#d9d9d9;border-top:1px solid #c8c8c8;border-left:1px solid #f6f6f6;border-bottom:1px solid #c4c4c4;box-sizing:border-box"></div>
<div style="position:absolute;left:595px;top:169px;width:1px;height:13px;background:#505050"></div>
<svg style="position:absolute;left:586px;top:169px" width="9" height="13"><path d="M5.8 4.7L3.3 7.0L5.8 9.3z" fill="#a4a4a4"/></svg>
<div style="position:absolute;left:596px;top:169px;width:9px;height:13px;background:#d9d9d9;border-top:1px solid #c8c8c8;border-left:1px solid #f6f6f6;border-bottom:1px solid #c4c4c4;box-sizing:border-box"></div>
<div style="position:absolute;left:605px;top:169px;width:1px;height:13px;background:#505050"></div>
<svg style="position:absolute;left:596px;top:169px" width="9" height="13"><path d="M3.7 4.7L6.2 7.0L3.7 9.3z" fill="#a4a4a4"/></svg>
<div style="position:absolute;left:561px;top:182px;width:25px;height:13px;background:#fff;border-top:1.5px solid #484848;border-left:2px solid #505050;border-bottom:1px solid #e4e4e4;box-sizing:border-box"></div>
<div class="t" style="left:561.5px;top:183.5px;width:25px;text-align:center;font-size:10px;color:#8c8c8c;transform:scaleX(0.84)">-5</div>
<div style="position:absolute;left:586px;top:182px;width:9px;height:13px;background:#d9d9d9;border-top:1px solid #c8c8c8;border-left:1px solid #f6f6f6;border-bottom:1px solid #c4c4c4;box-sizing:border-box"></div>
<div style="position:absolute;left:595px;top:182px;width:1px;height:13px;background:#505050"></div>
<svg style="position:absolute;left:586px;top:182px" width="9" height="13"><path d="M5.8 4.7L3.3 7.0L5.8 9.3z" fill="#a4a4a4"/></svg>
<div style="position:absolute;left:596px;top:182px;width:9px;height:13px;background:#d9d9d9;border-top:1px solid #c8c8c8;border-left:1px solid #f6f6f6;border-bottom:1px solid #c4c4c4;box-sizing:border-box"></div>
<div style="position:absolute;left:605px;top:182px;width:1px;height:13px;background:#505050"></div>
<svg style="position:absolute;left:596px;top:182px" width="9" height="13"><path d="M3.7 4.7L6.2 7.0L3.7 9.3z" fill="#a4a4a4"/></svg>
<div style="position:absolute;left:561px;top:195px;width:25px;height:13px;background:#fff;border-top:1.5px solid #484848;border-left:2px solid #505050;border-bottom:1px solid #e4e4e4;box-sizing:border-box"></div>
<div class="t" style="left:561.5px;top:196.5px;width:25px;text-align:center;font-size:10px;color:#8c8c8c;transform:scaleX(0.84)">-10</div>
<div style="position:absolute;left:586px;top:195px;width:9px;height:13px;background:#d9d9d9;border-top:1px solid #c8c8c8;border-left:1px solid #f6f6f6;border-bottom:1px solid #c4c4c4;box-sizing:border-box"></div>
<div style="position:absolute;left:595px;top:195px;width:1px;height:13px;background:#505050"></div>
<svg style="position:absolute;left:586px;top:195px" width="9" height="13"><path d="M5.8 4.7L3.3 7.0L5.8 9.3z" fill="#a4a4a4"/></svg>
<div style="position:absolute;left:596px;top:195px;width:9px;height:13px;background:#d9d9d9;border-top:1px solid #c8c8c8;border-left:1px solid #f6f6f6;border-bottom:1px solid #c4c4c4;box-sizing:border-box"></div>
<div style="position:absolute;left:605px;top:195px;width:1px;height:13px;background:#505050"></div>
<svg style="position:absolute;left:596px;top:195px" width="9" height="13"><path d="M3.7 4.7L6.2 7.0L3.7 9.3z" fill="#a4a4a4"/></svg>
<div style="position:absolute;left:561px;top:208px;width:25px;height:13px;background:#fff;border-top:1.5px solid #484848;border-left:2px solid #505050;border-bottom:1px solid #e4e4e4;box-sizing:border-box"></div>
<div class="t" style="left:561.5px;top:209.5px;width:25px;text-align:center;font-size:10px;color:#8c8c8c;transform:scaleX(0.84)">-10</div>
<div style="position:absolute;left:586px;top:208px;width:9px;height:13px;background:#d9d9d9;border-top:1px solid #c8c8c8;border-left:1px solid #f6f6f6;border-bottom:1px solid #c4c4c4;box-sizing:border-box"></div>
<div style="position:absolute;left:595px;top:208px;width:1px;height:13px;background:#505050"></div>
<svg style="position:absolute;left:586px;top:208px" width="9" height="13"><path d="M5.8 4.7L3.3 7.0L5.8 9.3z" fill="#a4a4a4"/></svg>
<div style="position:absolute;left:596px;top:208px;width:9px;height:13px;background:#d9d9d9;border-top:1px solid #c8c8c8;border-left:1px solid #f6f6f6;border-bottom:1px solid #c4c4c4;box-sizing:border-box"></div>
<div style="position:absolute;left:605px;top:208px;width:1px;height:13px;background:#505050"></div>
<svg style="position:absolute;left:596px;top:208px" width="9" height="13"><path d="M3.7 4.7L6.2 7.0L3.7 9.3z" fill="#a4a4a4"/></svg>
<div style="position:absolute;left:561px;top:221px;width:25px;height:12px;background:#fff;border-top:1.5px solid #484848;border-left:2px solid #505050;border-bottom:1px solid #e4e4e4;box-sizing:border-box"></div>
<div class="t" style="left:561.5px;top:222.5px;width:25px;text-align:center;font-size:10px;color:#8c8c8c;transform:scaleX(0.84)">-10</div>
<div style="position:absolute;left:586px;top:221px;width:9px;height:12px;background:#d9d9d9;border-top:1px solid #c8c8c8;border-left:1px solid #f6f6f6;border-bottom:1px solid #c4c4c4;box-sizing:border-box"></div>
<div style="position:absolute;left:595px;top:221px;width:1px;height:12px;background:#505050"></div>
<svg style="position:absolute;left:586px;top:221px" width="9" height="12"><path d="M5.8 4.2L3.3 6.5L5.8 8.8z" fill="#a4a4a4"/></svg>
<div style="position:absolute;left:596px;top:221px;width:9px;height:12px;background:#d9d9d9;border-top:1px solid #c8c8c8;border-left:1px solid #f6f6f6;border-bottom:1px solid #c4c4c4;box-sizing:border-box"></div>
<div style="position:absolute;left:605px;top:221px;width:1px;height:12px;background:#505050"></div>
<svg style="position:absolute;left:596px;top:221px" width="9" height="12"><path d="M3.7 4.2L6.2 6.5L3.7 8.8z" fill="#a4a4a4"/></svg>
<div style="position:absolute;left:561px;top:233px;width:25px;height:13px;background:#fff;border-top:1.5px solid #484848;border-left:2px solid #505050;border-bottom:1px solid #e4e4e4;box-sizing:border-box"></div>
<div class="t" style="left:561.5px;top:234.5px;width:25px;text-align:center;font-size:10px;color:#8c8c8c;transform:scaleX(0.84)">-10</div>
<div style="position:absolute;left:586px;top:233px;width:9px;height:13px;background:#d9d9d9;border-top:1px solid #c8c8c8;border-left:1px solid #f6f6f6;border-bottom:1px solid #c4c4c4;box-sizing:border-box"></div>
<div style="position:absolute;left:595px;top:233px;width:1px;height:13px;background:#505050"></div>
<svg style="position:absolute;left:586px;top:233px" width="9" height="13"><path d="M5.8 4.7L3.3 7.0L5.8 9.3z" fill="#a4a4a4"/></svg>
<div style="position:absolute;left:596px;top:233px;width:9px;height:13px;background:#d9d9d9;border-top:1px solid #c8c8c8;border-left:1px solid #f6f6f6;border-bottom:1px solid #c4c4c4;box-sizing:border-box"></div>
<div style="position:absolute;left:605px;top:233px;width:1px;height:13px;background:#505050"></div>
<svg style="position:absolute;left:596px;top:233px" width="9" height="13"><path d="M3.7 4.7L6.2 7.0L3.7 9.3z" fill="#a4a4a4"/></svg>
<div style="position:absolute;left:561px;top:246px;width:25px;height:13px;background:#fff;border-top:1.5px solid #484848;border-left:2px solid #505050;border-bottom:1px solid #e4e4e4;box-sizing:border-box"></div>
<div class="t" style="left:561.5px;top:247.5px;width:25px;text-align:center;font-size:10px;color:#000;transform:scaleX(0.84)">-45</div>
<div style="position:absolute;left:586px;top:246px;width:9px;height:13px;background:#d9d9d9;border-top:1px solid #c8c8c8;border-left:1px solid #f6f6f6;border-bottom:1px solid #c4c4c4;box-sizing:border-box"></div>
<div style="position:absolute;left:595px;top:246px;width:1px;height:13px;background:#505050"></div>
<svg style="position:absolute;left:586px;top:246px" width="9" height="13"><path d="M5.8 4.7L3.3 7.0L5.8 9.3z" fill="#000"/></svg>
<div style="position:absolute;left:596px;top:246px;width:9px;height:13px;background:#d9d9d9;border-top:1px solid #c8c8c8;border-left:1px solid #f6f6f6;border-bottom:1px solid #c4c4c4;box-sizing:border-box"></div>
<div style="position:absolute;left:605px;top:246px;width:1px;height:13px;background:#505050"></div>
<svg style="position:absolute;left:596px;top:246px" width="9" height="13"><path d="M3.7 4.7L6.2 7.0L3.7 9.3z" fill="#000"/></svg>
<div style="position:absolute;left:561px;top:259px;width:25px;height:13px;background:#fff;border-top:1.5px solid #484848;border-left:2px solid #505050;border-bottom:1px solid #e4e4e4;box-sizing:border-box"></div>
<div class="t" style="left:561.5px;top:260.5px;width:25px;text-align:center;font-size:10px;color:#000;transform:scaleX(0.84)">-45</div>
<div style="position:absolute;left:586px;top:259px;width:9px;height:13px;background:#d9d9d9;border-top:1px solid #c8c8c8;border-left:1px solid #f6f6f6;border-bottom:1px solid #c4c4c4;box-sizing:border-box"></div>
<div style="position:absolute;left:595px;top:259px;width:1px;height:13px;background:#505050"></div>
<svg style="position:absolute;left:586px;top:259px" width="9" height="13"><path d="M5.8 4.7L3.3 7.0L5.8 9.3z" fill="#000"/></svg>
<div style="position:absolute;left:596px;top:259px;width:9px;height:13px;background:#d9d9d9;border-top:1px solid #c8c8c8;border-left:1px solid #f6f6f6;border-bottom:1px solid #c4c4c4;box-sizing:border-box"></div>
<div style="position:absolute;left:605px;top:259px;width:1px;height:13px;background:#505050"></div>
<svg style="position:absolute;left:596px;top:259px" width="9" height="13"><path d="M3.7 4.7L6.2 7.0L3.7 9.3z" fill="#000"/></svg>
<div style="position:absolute;left:561px;top:272px;width:25px;height:13px;background:#fff;border-top:1.5px solid #484848;border-left:2px solid #505050;border-bottom:1px solid #e4e4e4;box-sizing:border-box"></div>
<div class="t" style="left:561.5px;top:273.5px;width:25px;text-align:center;font-size:10px;color:#000;transform:scaleX(0.84)">-45</div>
<div style="position:absolute;left:586px;top:272px;width:9px;height:13px;background:#d9d9d9;border-top:1px solid #c8c8c8;border-left:1px solid #f6f6f6;border-bottom:1px solid #c4c4c4;box-sizing:border-box"></div>
<div style="position:absolute;left:595px;top:272px;width:1px;height:13px;background:#505050"></div>
<svg style="position:absolute;left:586px;top:272px" width="9" height="13"><path d="M5.8 4.7L3.3 7.0L5.8 9.3z" fill="#000"/></svg>
<div style="position:absolute;left:596px;top:272px;width:9px;height:13px;background:#d9d9d9;border-top:1px solid #c8c8c8;border-left:1px solid #f6f6f6;border-bottom:1px solid #c4c4c4;box-sizing:border-box"></div>
<div style="position:absolute;left:605px;top:272px;width:1px;height:13px;background:#505050"></div>
<svg style="position:absolute;left:596px;top:272px" width="9" height="13"><path d="M3.7 4.7L6.2 7.0L3.7 9.3z" fill="#000"/></svg>
<div style="position:absolute;left:561px;top:285px;width:25px;height:12px;background:#fff;border-top:1.5px solid #484848;border-left:2px solid #505050;border-bottom:1px solid #e4e4e4;box-sizing:border-box"></div>
<div class="t" style="left:561.5px;top:286.5px;width:25px;text-align:center;font-size:10px;color:#000;transform:scaleX(0.84)">-45</div>
<div style="position:absolute;left:586px;top:285px;width:9px;height:12px;background:#d9d9d9;border-top:1px solid #c8c8c8;border-left:1px solid #f6f6f6;border-bottom:1px solid #c4c4c4;box-sizing:border-box"></div>
<div style="position:absolute;left:595px;top:285px;width:1px;height:12px;background:#505050"></div>
<svg style="position:absolute;left:586px;top:285px" width="9" height="12"><path d="M5.8 4.2L3.3 6.5L5.8 8.8z" fill="#000"/></svg>
<div style="position:absolute;left:596px;top:285px;width:9px;height:12px;background:#d9d9d9;border-top:1px solid #c8c8c8;border-left:1px solid #f6f6f6;border-bottom:1px solid #c4c4c4;box-sizing:border-box"></div>
<div style="position:absolute;left:605px;top:285px;width:1px;height:12px;background:#505050"></div>
<svg style="position:absolute;left:596px;top:285px" width="9" height="12"><path d="M3.7 4.2L6.2 6.5L3.7 8.8z" fill="#000"/></svg>
<div style="position:absolute;left:586px;top:297px;width:20px;height:1px;background:#505050"></div>
<div style="position:absolute;left:613px;top:144px;width:25px;height:13px;background:#fff;border-top:1.5px solid #484848;border-left:2px solid #505050;border-bottom:1px solid #e4e4e4;box-sizing:border-box"></div>
<div class="t" style="left:613.5px;top:145.5px;width:25px;text-align:center;font-size:10px;color:#8c8c8c;transform:scaleX(0.84)">1/70</div>
<div style="position:absolute;left:638px;top:144px;width:9px;height:13px;background:#d9d9d9;border-top:1px solid #c8c8c8;border-left:1px solid #f6f6f6;border-bottom:1px solid #c4c4c4;box-sizing:border-box"></div>
<div style="position:absolute;left:647px;top:144px;width:1px;height:13px;background:#505050"></div>
<svg style="position:absolute;left:638px;top:144px" width="9" height="13"><path d="M5.8 4.7L3.3 7.0L5.8 9.3z" fill="#a4a4a4"/></svg>
<div style="position:absolute;left:648px;top:144px;width:9px;height:13px;background:#d9d9d9;border-top:1px solid #c8c8c8;border-left:1px solid #f6f6f6;border-bottom:1px solid #c4c4c4;box-sizing:border-box"></div>
<div style="position:absolute;left:657px;top:144px;width:1px;height:13px;background:#505050"></div>
<svg style="position:absolute;left:648px;top:144px" width="9" height="13"><path d="M3.7 4.7L6.2 7.0L3.7 9.3z" fill="#a4a4a4"/></svg>
<div style="position:absolute;left:613px;top:157px;width:25px;height:12px;background:#fff;border-top:1.5px solid #484848;border-left:2px solid #505050;border-bottom:1px solid #e4e4e4;box-sizing:border-box"></div>
<div class="t" style="left:613.5px;top:158.5px;width:25px;text-align:center;font-size:10px;color:#8c8c8c;transform:scaleX(0.84)">1/70</div>
<div style="position:absolute;left:638px;top:157px;width:9px;height:12px;background:#d9d9d9;border-top:1px solid #c8c8c8;border-left:1px solid #f6f6f6;border-bottom:1px solid #c4c4c4;box-sizing:border-box"></div>
<div style="position:absolute;left:647px;top:157px;width:1px;height:12px;background:#505050"></div>
<svg style="position:absolute;left:638px;top:157px" width="9" height="12"><path d="M5.8 4.2L3.3 6.5L5.8 8.8z" fill="#a4a4a4"/></svg>
<div style="position:absolute;left:648px;top:157px;width:9px;height:12px;background:#d9d9d9;border-top:1px solid #c8c8c8;border-left:1px solid #f6f6f6;border-bottom:1px solid #c4c4c4;box-sizing:border-box"></div>
<div style="position:absolute;left:657px;top:157px;width:1px;height:12px;background:#505050"></div>
<svg style="position:absolute;left:648px;top:157px" width="9" height="12"><path d="M3.7 4.2L6.2 6.5L3.7 8.8z" fill="#a4a4a4"/></svg>
<div style="position:absolute;left:613px;top:169px;width:25px;height:13px;background:#fff;border-top:1.5px solid #484848;border-left:2px solid #505050;border-bottom:1px solid #e4e4e4;box-sizing:border-box"></div>
<div class="t" style="left:613.5px;top:170.5px;width:25px;text-align:center;font-size:10px;color:#8c8c8c;transform:scaleX(0.84)">1/70</div>
<div style="position:absolute;left:638px;top:169px;width:9px;height:13px;background:#d9d9d9;border-top:1px solid #c8c8c8;border-left:1px solid #f6f6f6;border-bottom:1px solid #c4c4c4;box-sizing:border-box"></div>
<div style="position:absolute;left:647px;top:169px;width:1px;height:13px;background:#505050"></div>
<svg style="position:absolute;left:638px;top:169px" width="9" height="13"><path d="M5.8 4.7L3.3 7.0L5.8 9.3z" fill="#a4a4a4"/></svg>
<div style="position:absolute;left:648px;top:169px;width:9px;height:13px;background:#d9d9d9;border-top:1px solid #c8c8c8;border-left:1px solid #f6f6f6;border-bottom:1px solid #c4c4c4;box-sizing:border-box"></div>
<div style="position:absolute;left:657px;top:169px;width:1px;height:13px;background:#505050"></div>
<svg style="position:absolute;left:648px;top:169px" width="9" height="13"><path d="M3.7 4.7L6.2 7.0L3.7 9.3z" fill="#a4a4a4"/></svg>
<div style="position:absolute;left:613px;top:182px;width:25px;height:13px;background:#fff;border-top:1.5px solid #484848;border-left:2px solid #505050;border-bottom:1px solid #e4e4e4;box-sizing:border-box"></div>
<div class="t" style="left:613.5px;top:183.5px;width:25px;text-align:center;font-size:10px;color:#8c8c8c;transform:scaleX(0.84)">1/70</div>
<div style="position:absolute;left:638px;top:182px;width:9px;height:13px;background:#d9d9d9;border-top:1px solid #c8c8c8;border-left:1px solid #f6f6f6;border-bottom:1px solid #c4c4c4;box-sizing:border-box"></div>
<div style="position:absolute;left:647px;top:182px;width:1px;height:13px;background:#505050"></div>
<svg style="position:absolute;left:638px;top:182px" width="9" height="13"><path d="M5.8 4.7L3.3 7.0L5.8 9.3z" fill="#a4a4a4"/></svg>
<div style="position:absolute;left:648px;top:182px;width:9px;height:13px;background:#d9d9d9;border-top:1px solid #c8c8c8;border-left:1px solid #f6f6f6;border-bottom:1px solid #c4c4c4;box-sizing:border-box"></div>
<div style="position:absolute;left:657px;top:182px;width:1px;height:13px;background:#505050"></div>
<svg style="position:absolute;left:648px;top:182px" width="9" height="13"><path d="M3.7 4.7L6.2 7.0L3.7 9.3z" fill="#a4a4a4"/></svg>
<div style="position:absolute;left:613px;top:195px;width:25px;height:13px;background:#fff;border-top:1.5px solid #484848;border-left:2px solid #505050;border-bottom:1px solid #e4e4e4;box-sizing:border-box"></div>
<div class="t" style="left:613.5px;top:196.5px;width:25px;text-align:center;font-size:10px;color:#8c8c8c;transform:scaleX(0.84)">1/70</div>
<div style="position:absolute;left:638px;top:195px;width:9px;height:13px;background:#d9d9d9;border-top:1px solid #c8c8c8;border-left:1px solid #f6f6f6;border-bottom:1px solid #c4c4c4;box-sizing:border-box"></div>
<div style="position:absolute;left:647px;top:195px;width:1px;height:13px;background:#505050"></div>
<svg style="position:absolute;left:638px;top:195px" width="9" height="13"><path d="M5.8 4.7L3.3 7.0L5.8 9.3z" fill="#a4a4a4"/></svg>
<div style="position:absolute;left:648px;top:195px;width:9px;height:13px;background:#d9d9d9;border-top:1px solid #c8c8c8;border-left:1px solid #f6f6f6;border-bottom:1px solid #c4c4c4;box-sizing:border-box"></div>
<div style="position:absolute;left:657px;top:195px;width:1px;height:13px;background:#505050"></div>
<svg style="position:absolute;left:648px;top:195px" width="9" height="13"><path d="M3.7 4.7L6.2 7.0L3.7 9.3z" fill="#a4a4a4"/></svg>
<div style="position:absolute;left:613px;top:208px;width:25px;height:13px;background:#fff;border-top:1.5px solid #484848;border-left:2px solid #505050;border-bottom:1px solid #e4e4e4;box-sizing:border-box"></div>
<div class="t" style="left:613.5px;top:209.5px;width:25px;text-align:center;font-size:10px;color:#8c8c8c;transform:scaleX(0.84)">1/70</div>
<div style="position:absolute;left:638px;top:208px;width:9px;height:13px;background:#d9d9d9;border-top:1px solid #c8c8c8;border-left:1px solid #f6f6f6;border-bottom:1px solid #c4c4c4;box-sizing:border-box"></div>
<div style="position:absolute;left:647px;top:208px;width:1px;height:13px;background:#505050"></div>
<svg style="position:absolute;left:638px;top:208px" width="9" height="13"><path d="M5.8 4.7L3.3 7.0L5.8 9.3z" fill="#a4a4a4"/></svg>
<div style="position:absolute;left:648px;top:208px;width:9px;height:13px;background:#d9d9d9;border-top:1px solid #c8c8c8;border-left:1px solid #f6f6f6;border-bottom:1px solid #c4c4c4;box-sizing:border-box"></div>
<div style="position:absolute;left:657px;top:208px;width:1px;height:13px;background:#505050"></div>
<svg style="position:absolute;left:648px;top:208px" width="9" height="13"><path d="M3.7 4.7L6.2 7.0L3.7 9.3z" fill="#a4a4a4"/></svg>
<div style="position:absolute;left:613px;top:221px;width:25px;height:12px;background:#fff;border-top:1.5px solid #484848;border-left:2px solid #505050;border-bottom:1px solid #e4e4e4;box-sizing:border-box"></div>
<div class="t" style="left:613.5px;top:222.5px;width:25px;text-align:center;font-size:10px;color:#8c8c8c;transform:scaleX(0.84)">1/70</div>
<div style="position:absolute;left:638px;top:221px;width:9px;height:12px;background:#d9d9d9;border-top:1px solid #c8c8c8;border-left:1px solid #f6f6f6;border-bottom:1px solid #c4c4c4;box-sizing:border-box"></div>
<div style="position:absolute;left:647px;top:221px;width:1px;height:12px;background:#505050"></div>
<svg style="position:absolute;left:638px;top:221px" width="9" height="12"><path d="M5.8 4.2L3.3 6.5L5.8 8.8z" fill="#a4a4a4"/></svg>
<div style="position:absolute;left:648px;top:221px;width:9px;height:12px;background:#d9d9d9;border-top:1px solid #c8c8c8;border-left:1px solid #f6f6f6;border-bottom:1px solid #c4c4c4;box-sizing:border-box"></div>
<div style="position:absolute;left:657px;top:221px;width:1px;height:12px;background:#505050"></div>
<svg style="position:absolute;left:648px;top:221px" width="9" height="12"><path d="M3.7 4.2L6.2 6.5L3.7 8.8z" fill="#a4a4a4"/></svg>
<div style="position:absolute;left:613px;top:233px;width:25px;height:13px;background:#fff;border-top:1.5px solid #484848;border-left:2px solid #505050;border-bottom:1px solid #e4e4e4;box-sizing:border-box"></div>
<div class="t" style="left:613.5px;top:234.5px;width:25px;text-align:center;font-size:10px;color:#8c8c8c;transform:scaleX(0.84)">1/70</div>
<div style="position:absolute;left:638px;top:233px;width:9px;height:13px;background:#d9d9d9;border-top:1px solid #c8c8c8;border-left:1px solid #f6f6f6;border-bottom:1px solid #c4c4c4;box-sizing:border-box"></div>
<div style="position:absolute;left:647px;top:233px;width:1px;height:13px;background:#505050"></div>
<svg style="position:absolute;left:638px;top:233px" width="9" height="13"><path d="M5.8 4.7L3.3 7.0L5.8 9.3z" fill="#a4a4a4"/></svg>
<div style="position:absolute;left:648px;top:233px;width:9px;height:13px;background:#d9d9d9;border-top:1px solid #c8c8c8;border-left:1px solid #f6f6f6;border-bottom:1px solid #c4c4c4;box-sizing:border-box"></div>
<div style="position:absolute;left:657px;top:233px;width:1px;height:13px;background:#505050"></div>
<svg style="position:absolute;left:648px;top:233px" width="9" height="13"><path d="M3.7 4.7L6.2 7.0L3.7 9.3z" fill="#a4a4a4"/></svg>
<div style="position:absolute;left:613px;top:246px;width:25px;height:13px;background:#fff;border-top:1.5px solid #484848;border-left:2px solid #505050;border-bottom:1px solid #e4e4e4;box-sizing:border-box"></div>
<div class="t" style="left:613.5px;top:247.5px;width:25px;text-align:center;font-size:10px;color:#000;transform:scaleX(0.84)">1/70</div>
<div style="position:absolute;left:638px;top:246px;width:9px;height:13px;background:#d9d9d9;border-top:1px solid #c8c8c8;border-left:1px solid #f6f6f6;border-bottom:1px solid #c4c4c4;box-sizing:border-box"></div>
<div style="position:absolute;left:647px;top:246px;width:1px;height:13px;background:#505050"></div>
<svg style="position:absolute;left:638px;top:246px" width="9" height="13"><path d="M5.8 4.7L3.3 7.0L5.8 9.3z" fill="#000"/></svg>
<div style="position:absolute;left:648px;top:246px;width:9px;height:13px;background:#d9d9d9;border-top:1px solid #c8c8c8;border-left:1px solid #f6f6f6;border-bottom:1px solid #c4c4c4;box-sizing:border-box"></div>
<div style="position:absolute;left:657px;top:246px;width:1px;height:13px;background:#505050"></div>
<svg style="position:absolute;left:648px;top:246px" width="9" height="13"><path d="M3.7 4.7L6.2 7.0L3.7 9.3z" fill="#000"/></svg>
<div style="position:absolute;left:613px;top:259px;width:25px;height:13px;background:#fff;border-top:1.5px solid #484848;border-left:2px solid #505050;border-bottom:1px solid #e4e4e4;box-sizing:border-box"></div>
<div class="t" style="left:613.5px;top:260.5px;width:25px;text-align:center;font-size:10px;color:#000;transform:scaleX(0.84)">1/70</div>
<div style="position:absolute;left:638px;top:259px;width:9px;height:13px;background:#d9d9d9;border-top:1px solid #c8c8c8;border-left:1px solid #f6f6f6;border-bottom:1px solid #c4c4c4;box-sizing:border-box"></div>
<div style="position:absolute;left:647px;top:259px;width:1px;height:13px;background:#505050"></div>
<svg style="position:absolute;left:638px;top:259px" width="9" height="13"><path d="M5.8 4.7L3.3 7.0L5.8 9.3z" fill="#000"/></svg>
<div style="position:absolute;left:648px;top:259px;width:9px;height:13px;background:#d9d9d9;border-top:1px solid #c8c8c8;border-left:1px solid #f6f6f6;border-bottom:1px solid #c4c4c4;box-sizing:border-box"></div>
<div style="position:absolute;left:657px;top:259px;width:1px;height:13px;background:#505050"></div>
<svg style="position:absolute;left:648px;top:259px" width="9" height="13"><path d="M3.7 4.7L6.2 7.0L3.7 9.3z" fill="#000"/></svg>
<div style="position:absolute;left:613px;top:272px;width:25px;height:13px;background:#fff;border-top:1.5px solid #484848;border-left:2px solid #505050;border-bottom:1px solid #e4e4e4;box-sizing:border-box"></div>
<div class="t" style="left:613.5px;top:273.5px;width:25px;text-align:center;font-size:10px;color:#000;transform:scaleX(0.84)">1/70</div>
<div style="position:absolute;left:638px;top:272px;width:9px;height:13px;background:#d9d9d9;border-top:1px solid #c8c8c8;border-left:1px solid #f6f6f6;border-bottom:1px solid #c4c4c4;box-sizing:border-box"></div>
<div style="position:absolute;left:647px;top:272px;width:1px;height:13px;background:#505050"></div>
<svg style="position:absolute;left:638px;top:272px" width="9" height="13"><path d="M5.8 4.7L3.3 7.0L5.8 9.3z" fill="#000"/></svg>
<div style="position:absolute;left:648px;top:272px;width:9px;height:13px;background:#d9d9d9;border-top:1px solid #c8c8c8;border-left:1px solid #f6f6f6;border-bottom:1px solid #c4c4c4;box-sizing:border-box"></div>
<div style="position:absolute;left:657px;top:272px;width:1px;height:13px;background:#505050"></div>
<svg style="position:absolute;left:648px;top:272px" width="9" height="13"><path d="M3.7 4.7L6.2 7.0L3.7 9.3z" fill="#000"/></svg>
<div style="position:absolute;left:613px;top:285px;width:25px;height:12px;background:#fff;border-top:1.5px solid #484848;border-left:2px solid #505050;border-bottom:1px solid #e4e4e4;box-sizing:border-box"></div>
<div class="t" style="left:613.5px;top:286.5px;width:25px;text-align:center;font-size:10px;color:#000;transform:scaleX(0.84)">1/20</div>
<div style="position:absolute;left:638px;top:285px;width:9px;height:12px;background:#d9d9d9;border-top:1px solid #c8c8c8;border-left:1px solid #f6f6f6;border-bottom:1px solid #c4c4c4;box-sizing:border-box"></div>
<div style="position:absolute;left:647px;top:285px;width:1px;height:12px;background:#505050"></div>
<svg style="position:absolute;left:638px;top:285px" width="9" height="12"><path d="M5.8 4.2L3.3 6.5L5.8 8.8z" fill="#000"/></svg>
<div style="position:absolute;left:648px;top:285px;width:9px;height:12px;background:#d9d9d9;border-top:1px solid #c8c8c8;border-left:1px solid #f6f6f6;border-bottom:1px solid #c4c4c4;box-sizing:border-box"></div>
<div style="position:absolute;left:657px;top:285px;width:1px;height:12px;background:#505050"></div>
<svg style="position:absolute;left:648px;top:285px" width="9" height="12"><path d="M3.7 4.2L6.2 6.5L3.7 8.8z" fill="#000"/></svg>
<div style="position:absolute;left:638px;top:297px;width:20px;height:1px;background:#505050"></div>
<div class="t" style="left:513px;top:297.5px;font-size:7.6px;font-weight:bold;color:#111;letter-spacing:-0.2px">Freq</div>
<div class="t" style="left:571px;top:297.5px;font-size:7.6px;font-weight:bold;color:#111;letter-spacing:-0.35px">Gain</div>
<div class="t" style="left:624px;top:297.5px;font-size:7.6px;font-weight:bold;color:#111;">Q</div>
<div style="position:absolute;left:670px;top:135px;width:167px;height:129px;border:1px solid #8a8a8a;box-sizing:border-box"></div>
<div style="position:absolute;left:671px;top:136px;width:167px;height:129px;border:1px solid #fff;box-sizing:border-box"></div>
<div class="t" style="left:677px;top:144.5px;font-size:8.5px;font-weight:normal;color:#000;">Num notch automatic</div>
<div style="position:absolute;left:760px;top:144px;width:13px;height:10.5px;background:#d9d9d9;border-top:1px solid #fff;border-left:1px solid #fff;border-right:1px solid #404040;border-bottom:1px solid #404040;box-sizing:border-box"><div style="position:absolute;left:0;top:0;right:0;bottom:0;border-right:1px solid #8c8c8c;border-bottom:1px solid #8c8c8c"></div></div>
<svg style="position:absolute;left:760px;top:144px" width="13" height="10"><path d="M7.3 2.5L4.8 5L7.3 7.5z" fill="#000"/></svg>
<div style="position:absolute;left:773px;top:144px;width:13px;height:10.5px;background:#d9d9d9;border-top:1px solid #fff;border-left:1px solid #fff;border-right:1px solid #404040;border-bottom:1px solid #404040;box-sizing:border-box"><div style="position:absolute;left:0;top:0;right:0;bottom:0;border-right:1px solid #8c8c8c;border-bottom:1px solid #8c8c8c"></div></div>
<svg style="position:absolute;left:773px;top:144px" width="13" height="10"><path d="M5.2 2.5L7.7 5L5.2 7.5z" fill="#000"/></svg>
<div class="t" style="left:778px;top:143.8px;width:60px;text-align:center;font-size:9.5px;font-weight:bold">8</div>
<div class="t" style="left:677px;top:163.75px;font-size:8.5px;font-weight:normal;color:#000;">Q notch automatic</div>
<div style="position:absolute;left:760px;top:163px;width:13px;height:10.5px;background:#d9d9d9;border-top:1px solid #fff;border-left:1px solid #fff;border-right:1px solid #404040;border-bottom:1px solid #404040;box-sizing:border-box"><div style="position:absolute;left:0;top:0;right:0;bottom:0;border-right:1px solid #8c8c8c;border-bottom:1px solid #8c8c8c"></div></div>
<svg style="position:absolute;left:760px;top:163px" width="13" height="10"><path d="M7.3 2.5L4.8 5L7.3 7.5z" fill="#000"/></svg>
<div style="position:absolute;left:773px;top:163px;width:13px;height:10.5px;background:#d9d9d9;border-top:1px solid #fff;border-left:1px solid #fff;border-right:1px solid #404040;border-bottom:1px solid #404040;box-sizing:border-box"><div style="position:absolute;left:0;top:0;right:0;bottom:0;border-right:1px solid #8c8c8c;border-bottom:1px solid #8c8c8c"></div></div>
<svg style="position:absolute;left:773px;top:163px" width="13" height="10"><path d="M5.2 2.5L7.7 5L5.2 7.5z" fill="#000"/></svg>
<div class="t" style="left:778px;top:163.05px;width:60px;text-align:center;font-size:9.5px;font-weight:bold">1/70</div>
<div class="t" style="left:677px;top:183.0px;font-size:8.5px;font-weight:normal;color:#000;">Attenuation notch</div>
<div style="position:absolute;left:760px;top:182px;width:13px;height:10.5px;background:#d9d9d9;border-top:1px solid #fff;border-left:1px solid #fff;border-right:1px solid #404040;border-bottom:1px solid #404040;box-sizing:border-box"><div style="position:absolute;left:0;top:0;right:0;bottom:0;border-right:1px solid #8c8c8c;border-bottom:1px solid #8c8c8c"></div></div>
<svg style="position:absolute;left:760px;top:182px" width="13" height="10"><path d="M7.3 2.5L4.8 5L7.3 7.5z" fill="#000"/></svg>
<div style="position:absolute;left:773px;top:182px;width:13px;height:10.5px;background:#d9d9d9;border-top:1px solid #fff;border-left:1px solid #fff;border-right:1px solid #404040;border-bottom:1px solid #404040;box-sizing:border-box"><div style="position:absolute;left:0;top:0;right:0;bottom:0;border-right:1px solid #8c8c8c;border-bottom:1px solid #8c8c8c"></div></div>
<svg style="position:absolute;left:773px;top:182px" width="13" height="10"><path d="M5.2 2.5L7.7 5L5.2 7.5z" fill="#000"/></svg>
<div class="t" style="left:781px;top:182.3px;width:60px;text-align:center;font-size:9.5px;font-weight:bold">Variable</div>
<div class="t" style="left:677px;top:202.25px;font-size:8.5px;font-weight:normal;color:#000;">Release notch</div>
<div style="position:absolute;left:760px;top:201px;width:13px;height:10.5px;background:#d9d9d9;border-top:1px solid #fff;border-left:1px solid #fff;border-right:1px solid #404040;border-bottom:1px solid #404040;box-sizing:border-box"><div style="position:absolute;left:0;top:0;right:0;bottom:0;border-right:1px solid #8c8c8c;border-bottom:1px solid #8c8c8c"></div></div>
<svg style="position:absolute;left:760px;top:201px" width="13" height="10"><path d="M7.3 2.5L4.8 5L7.3 7.5z" fill="#000"/></svg>
<div style="position:absolute;left:773px;top:201px;width:13px;height:10.5px;background:#d9d9d9;border-top:1px solid #fff;border-left:1px solid #fff;border-right:1px solid #404040;border-bottom:1px solid #404040;box-sizing:border-box"><div style="position:absolute;left:0;top:0;right:0;bottom:0;border-right:1px solid #8c8c8c;border-bottom:1px solid #8c8c8c"></div></div>
<svg style="position:absolute;left:773px;top:201px" width="13" height="10"><path d="M5.2 2.5L7.7 5L5.2 7.5z" fill="#000"/></svg>
<div class="t" style="left:781px;top:201.55px;width:60px;text-align:center;font-size:9.5px;font-weight:bold">Fast</div>
<div class="t" style="left:677px;top:221.5px;font-size:8.5px;font-weight:normal;color:#000;">Mode search</div>
<div style="position:absolute;left:760px;top:220px;width:13px;height:10.5px;background:#d9d9d9;border-top:1px solid #fff;border-left:1px solid #fff;border-right:1px solid #404040;border-bottom:1px solid #404040;box-sizing:border-box"><div style="position:absolute;left:0;top:0;right:0;bottom:0;border-right:1px solid #8c8c8c;border-bottom:1px solid #8c8c8c"></div></div>
<svg style="position:absolute;left:760px;top:220px" width="13" height="10"><path d="M7.3 2.5L4.8 5L7.3 7.5z" fill="#000"/></svg>
<div style="position:absolute;left:773px;top:220px;width:13px;height:10.5px;background:#d9d9d9;border-top:1px solid #fff;border-left:1px solid #fff;border-right:1px solid #404040;border-bottom:1px solid #404040;box-sizing:border-box"><div style="position:absolute;left:0;top:0;right:0;bottom:0;border-right:1px solid #8c8c8c;border-bottom:1px solid #8c8c8c"></div></div>
<svg style="position:absolute;left:773px;top:220px" width="13" height="10"><path d="M5.2 2.5L7.7 5L5.2 7.5z" fill="#000"/></svg>
<div class="t" style="left:784px;top:220.8px;width:60px;text-align:center;font-size:9.5px;font-weight:bold">Fast</div>
<div class="t" style="left:677px;top:240px;font-size:8.5px;font-weight:normal;color:#000;">Sensitivity</div>
<div style="position:absolute;left:726px;top:241px;width:31px;height:2px;background:#606060"></div>
<div style="position:absolute;left:760px;top:241px;width:34px;height:2px;background:#606060"></div>
<div style="position:absolute;left:726px;top:243px;width:31px;height:1px;background:#f4f4f4"></div>
<div style="position:absolute;left:760px;top:243px;width:34px;height:1px;background:#f4f4f4"></div>
<div style="position:absolute;left:726px;top:241px;width:1px;height:3px;background:#505050"></div>
<svg style="position:absolute;left:720px;top:234px" width="80" height="20"><path d="M38.5 7v4.5q0 1.5-1.5 2" fill="none" stroke="#404040" stroke-width="1.1"/><rect x="11.4" y="15.5" width="1" height="2" fill="#000"/><rect x="15.8" y="15.5" width="1" height="2" fill="#000"/><rect x="20.2" y="15.5" width="1" height="2" fill="#000"/><rect x="24.6" y="15.5" width="1" height="2" fill="#000"/><rect x="29.0" y="15.5" width="1" height="2" fill="#000"/><rect x="33.4" y="15.5" width="1" height="2" fill="#000"/><rect x="37.8" y="15.5" width="1" height="2" fill="#000"/><rect x="42.2" y="15.5" width="1" height="2" fill="#000"/><rect x="46.6" y="15.5" width="1" height="2" fill="#000"/><rect x="51.0" y="15.5" width="1" height="2" fill="#000"/><rect x="55.4" y="15.5" width="1" height="2" fill="#000"/><rect x="59.8" y="15.5" width="1" height="2" fill="#000"/><rect x="64.2" y="15.5" width="1" height="2" fill="#000"/><rect x="68.6" y="15.5" width="1" height="2" fill="#000"/><path d="M5 16.5l2-1.5l2 1.5l-2 1.5z" fill="#000"/><rect x="73" y="15" width="1.3" height="3" fill="#000"/></svg>
<div style="position:absolute;left:798px;top:240px;width:33px;height:12px;background:#fff"></div>
<div class="t" style="left:798px;top:241.5px;width:33px;text-align:center;font-size:9px">8</div>
<div style="position:absolute;left:670px;top:271px;width:167px;height:39px;border:1px solid #8a8a8a;box-sizing:border-box"></div>
<div style="position:absolute;left:671px;top:272px;width:167px;height:39px;border:1px solid #fff;box-sizing:border-box"></div>
<div style="position:absolute;left:676px;top:277px;width:71.5px;height:26.5px;background:#d9d9d9;border-top:1px solid #fff;border-left:1px solid #fff;border-right:1px solid #404040;border-bottom:1px solid #404040;box-sizing:border-box"><div style="position:absolute;left:0;top:0;right:0;bottom:0;border-right:1px solid #8c8c8c;border-bottom:1px solid #8c8c8c"></div></div>
<div class="t" style="left:676px;top:280.5px;width:71.5px;text-align:center;font-size:8.5px;line-height:10.5px">Reset Notch<br>Manual</div>
<div style="position:absolute;left:760px;top:277px;width:71.5px;height:26.5px;background:#d9d9d9;border-top:1px solid #fff;border-left:1px solid #fff;border-right:1px solid #404040;border-bottom:1px solid #404040;box-sizing:border-box"><div style="position:absolute;left:0;top:0;right:0;bottom:0;border-right:1px solid #8c8c8c;border-bottom:1px solid #8c8c8c"></div></div>
<div class="t" style="left:760px;top:280.5px;width:71.5px;text-align:center;font-size:8.5px;line-height:10.5px">Reset Notch<br>Automatic</div>
<div style="position:absolute;left:4px;top:326px;width:838px;height:195px;border:1px solid #8a8a8a;border-left:none;box-sizing:border-box"></div>
<div style="position:absolute;left:4px;top:327px;width:839px;height:195px;border:1px solid #fff;border-left:none;box-sizing:border-box"></div>
<div style="position:absolute;left:9px;top:321px;width:58px;height:10px;background:#d9d9d9"></div>
<div class="t" style="left:11.5px;top:323.5px;font-size:8.5px;font-weight:normal;color:#000;">Channel Right</div>
<div style="position:absolute;left:10px;top:340px;width:481px;height:175px;border:1px solid #8a8a8a;box-sizing:border-box"></div>
<div style="position:absolute;left:11px;top:341px;width:481px;height:175px;border:1px solid #fff;box-sizing:border-box"></div>
<svg style="position:absolute;left:17px;top:348px" width="461" height="154"><rect x="0" y="0" width="461" height="154" fill="#fff"/><polygon points="386.32,26.63 388.76,26.65 391.00,26.68 393.04,26.72 394.90,26.77 396.60,26.82 398.16,26.88 399.58,26.96 400.88,27.05 402.07,27.16 403.16,27.29 404.16,27.45 405.08,27.64 405.91,27.87 406.68,28.14 407.39,28.47 408.04,28.87 408.64,29.34 409.19,29.91 409.70,30.59 410.17,31.41 410.61,32.39 410.83,33.57 410.88,34.98 410.93,36.68 411.00,38.71 411.08,41.15 411.17,44.08 411.29,47.60 411.43,51.82 411.59,56.88 411.79,62.96 412.03,70.25 412.32,79.00 412.66,89.50 412.90,96.90 414.20,98.40 415.50,96.90 415.74,89.50 416.08,79.00 416.37,70.25 416.61,62.96 416.81,56.88 416.97,51.82 417.11,47.60 417.23,44.08 417.32,41.15 417.40,38.71 417.47,36.68 417.52,34.98 417.57,33.57 417.79,32.39 418.23,31.41 418.70,30.59 419.21,29.91 419.76,29.34 420.36,28.87 421.01,28.47 421.72,28.14 422.49,27.87 423.32,27.64 424.24,27.45 425.24,27.29 426.33,27.16 427.52,27.05 428.82,26.96 430.24,26.88 431.80,26.82 433.50,26.77 435.36,26.72 437.40,26.68 439.64,26.65 442.08,26.63" fill="#f0f3fa" stroke="none"/><polygon points="261.53,26.63 262.83,26.65 264.03,26.68 265.11,26.72 266.11,26.77 267.01,26.82 267.84,26.88 268.60,26.96 269.30,27.05 269.93,27.16 270.51,27.29 271.05,27.45 271.53,27.64 271.98,27.87 272.39,28.14 272.77,28.47 273.11,28.87 273.43,29.34 273.73,29.91 274.00,30.59 274.25,31.41 274.49,32.39 274.70,33.57 274.90,34.98 274.90,36.68 274.90,38.71 274.90,41.15 274.90,44.08 274.90,47.60 274.90,51.82 274.90,54.66 276.40,56.16 277.90,54.66 277.90,51.82 277.90,47.60 277.90,44.08 277.90,41.15 277.90,38.71 277.90,36.68 277.90,34.98 278.10,33.57 278.31,32.39 278.55,31.41 278.80,30.59 279.07,29.91 279.37,29.34 279.69,28.87 280.03,28.47 280.41,28.14 280.82,27.87 281.27,27.64 281.75,27.45 282.29,27.29 282.87,27.16 283.50,27.05 284.20,26.96 284.96,26.88 285.79,26.82 286.69,26.77 287.69,26.72 288.77,26.68 289.97,26.65 291.27,26.63" fill="#f0f3fa" stroke="none"/><polygon points="149.94,26.63 151.49,26.65 152.90,26.68 154.20,26.72 155.38,26.77 156.45,26.82 157.44,26.88 158.34,26.96 159.17,27.05 159.92,27.16 160.61,27.29 161.24,27.45 161.82,27.64 162.35,27.87 162.84,28.14 163.29,28.47 163.70,28.87 164.08,29.34 164.43,29.91 164.75,30.59 165.05,31.41 165.33,32.39 165.58,33.57 165.82,34.98 166.05,36.68 166.10,38.71 166.10,41.15 166.10,44.08 166.10,47.60 166.10,51.82 166.10,56.88 166.10,62.96 166.10,70.25 166.10,72.58 167.60,74.08 169.10,72.58 169.10,70.25 169.10,62.96 169.10,56.88 169.10,51.82 169.10,47.60 169.10,44.08 169.10,41.15 169.10,38.71 169.15,36.68 169.38,34.98 169.62,33.57 169.87,32.39 170.15,31.41 170.45,30.59 170.77,29.91 171.12,29.34 171.50,28.87 171.91,28.47 172.36,28.14 172.85,27.87 173.38,27.64 173.96,27.45 174.59,27.29 175.28,27.16 176.03,27.05 176.86,26.96 177.76,26.88 178.75,26.82 179.82,26.77 181.00,26.72 182.30,26.68 183.71,26.65 185.26,26.63" fill="#f0f3fa" stroke="none"/><line x1="27.5" y1="0" x2="27.5" y2="154" stroke="#b8b8b8" stroke-width="1"/><line x1="46.5" y1="0" x2="46.5" y2="154" stroke="#b8b8b8" stroke-width="1"/><line x1="61.5" y1="0" x2="61.5" y2="154" stroke="#b8b8b8" stroke-width="1"/><line x1="73.5" y1="0" x2="73.5" y2="154" stroke="#b8b8b8" stroke-width="1"/><line x1="83.5" y1="0" x2="83.5" y2="154" stroke="#b8b8b8" stroke-width="1"/><line x1="92.5" y1="0" x2="92.5" y2="154" stroke="#b8b8b8" stroke-width="1"/><line x1="100.5" y1="0" x2="100.5" y2="154" stroke="#b8b8b8" stroke-width="1"/><line x1="107.5" y1="0" x2="107.5" y2="154" stroke="#b8b8b8" stroke-width="1"/><line x1="153.5" y1="0" x2="153.5" y2="154" stroke="#b8b8b8" stroke-width="1"/><line x1="180.5" y1="0" x2="180.5" y2="154" stroke="#b8b8b8" stroke-width="1"/><line x1="199.5" y1="0" x2="199.5" y2="154" stroke="#b8b8b8" stroke-width="1"/><line x1="214.5" y1="0" x2="214.5" y2="154" stroke="#b8b8b8" stroke-width="1"/><line x1="226.5" y1="0" x2="226.5" y2="154" stroke="#b8b8b8" stroke-width="1"/><line x1="237.5" y1="0" x2="237.5" y2="154" stroke="#b8b8b8" stroke-width="1"/><line x1="246.5" y1="0" x2="246.5" y2="154" stroke="#b8b8b8" stroke-width="1"/><line x1="253.5" y1="0" x2="253.5" y2="154" stroke="#b8b8b8" stroke-width="1"/><line x1="260.5" y1="0" x2="260.5" y2="154" stroke="#b8b8b8" stroke-width="1"/><line x1="307.5" y1="0" x2="307.5" y2="154" stroke="#b8b8b8" stroke-width="1"/><line x1="334.5" y1="0" x2="334.5" y2="154" stroke="#b8b8b8" stroke-width="1"/><line x1="353.5" y1="0" x2="353.5" y2="154" stroke="#b8b8b8" stroke-width="1"/><line x1="368.5" y1="0" x2="368.5" y2="154" stroke="#b8b8b8" stroke-width="1"/><line x1="380.5" y1="0" x2="380.5" y2="154" stroke="#b8b8b8" stroke-width="1"/><line x1="390.5" y1="0" x2="390.5" y2="154" stroke="#b8b8b8" stroke-width="1"/><line x1="399.5" y1="0" x2="399.5" y2="154" stroke="#b8b8b8" stroke-width="1"/><line x1="407.5" y1="0" x2="407.5" y2="154" stroke="#b8b8b8" stroke-width="1"/><line x1="414.5" y1="0" x2="414.5" y2="154" stroke="#b8b8b8" stroke-width="1"/><line x1="0" y1="52.5" x2="461" y2="52.5" stroke="#b8b8b8" stroke-width="1"/><line x1="0" y1="77.5" x2="461" y2="77.5" stroke="#b8b8b8" stroke-width="1"/><line x1="0" y1="103.5" x2="461" y2="103.5" stroke="#b8b8b8" stroke-width="1"/><line x1="0" y1="128.5" x2="461" y2="128.5" stroke="#b8b8b8" stroke-width="1"/><line x1="0" y1="26.5" x2="461" y2="26.5" stroke="#b8b8b8" stroke-width="1"/><rect x="0.5" y="0.5" width="460" height="153" fill="none" stroke="#a8a8a8"/><polyline points="0.5,26.5 149.94,26.63 151.49,26.65 152.90,26.68 154.20,26.72 155.38,26.77 156.45,26.82 157.44,26.88 158.34,26.96 159.17,27.05 159.92,27.16 160.61,27.29 161.24,27.45 161.82,27.64 162.35,27.87 162.84,28.14 163.29,28.47 163.70,28.87 164.08,29.34 164.43,29.91 164.75,30.59 165.05,31.41 165.33,32.39 165.58,33.57 165.82,34.98 166.05,36.68 166.10,38.71 166.10,41.15 166.10,44.08 166.10,47.60 166.10,51.82 166.10,56.88 166.10,62.96 166.10,70.25 166.10,72.58 167.60,74.08 169.10,72.58 169.10,70.25 169.10,62.96 169.10,56.88 169.10,51.82 169.10,47.60 169.10,44.08 169.10,41.15 169.10,38.71 169.15,36.68 169.38,34.98 169.62,33.57 169.87,32.39 170.15,31.41 170.45,30.59 170.77,29.91 171.12,29.34 171.50,28.87 171.91,28.47 172.36,28.14 172.85,27.87 173.38,27.64 173.96,27.45 174.59,27.29 175.28,27.16 176.03,27.05 176.86,26.96 177.76,26.88 178.75,26.82 179.82,26.77 181.00,26.72 182.30,26.68 183.71,26.65 185.26,26.63 261.53,26.63 262.83,26.65 264.03,26.68 265.11,26.72 266.11,26.77 267.01,26.82 267.84,26.88 268.60,26.96 269.30,27.05 269.93,27.16 270.51,27.29 271.05,27.45 271.53,27.64 271.98,27.87 272.39,28.14 272.77,28.47 273.11,28.87 273.43,29.34 273.73,29.91 274.00,30.59 274.25,31.41 274.49,32.39 274.70,33.57 274.90,34.98 274.90,36.68 274.90,38.71 274.90,41.15 274.90,44.08 274.90,47.60 274.90,51.82 274.90,54.66 276.40,56.16 277.90,54.66 277.90,51.82 277.90,47.60 277.90,44.08 277.90,41.15 277.90,38.71 277.90,36.68 277.90,34.98 278.10,33.57 278.31,32.39 278.55,31.41 278.80,30.59 279.07,29.91 279.37,29.34 279.69,28.87 280.03,28.47 280.41,28.14 280.82,27.87 281.27,27.64 281.75,27.45 282.29,27.29 282.87,27.16 283.50,27.05 284.20,26.96 284.96,26.88 285.79,26.82 286.69,26.77 287.69,26.72 288.77,26.68 289.97,26.65 291.27,26.63 386.32,26.63 388.76,26.65 391.00,26.68 393.04,26.72 394.90,26.77 396.60,26.82 398.16,26.88 399.58,26.96 400.88,27.05 402.07,27.16 403.16,27.29 404.16,27.45 405.08,27.64 405.91,27.87 406.68,28.14 407.39,28.47 408.04,28.87 408.64,29.34 409.19,29.91 409.70,30.59 410.17,31.41 410.61,32.39 410.83,33.57 410.88,34.98 410.93,36.68 411.00,38.71 411.08,41.15 411.17,44.08 411.29,47.60 411.43,51.82 411.59,56.88 411.79,62.96 412.03,70.25 412.32,79.00 412.66,89.50 412.90,96.90 414.20,98.40 415.50,96.90 415.74,89.50 416.08,79.00 416.37,70.25 416.61,62.96 416.81,56.88 416.97,51.82 417.11,47.60 417.23,44.08 417.32,41.15 417.40,38.71 417.47,36.68 417.52,34.98 417.57,33.57 417.79,32.39 418.23,31.41 418.70,30.59 419.21,29.91 419.76,29.34 420.36,28.87 421.01,28.47 421.72,28.14 422.49,27.87 423.32,27.64 424.24,27.45 425.24,27.29 426.33,27.16 427.52,27.05 428.82,26.96 430.24,26.88 431.80,26.82 433.50,26.77 435.36,26.72 437.40,26.68 439.64,26.65 442.08,26.63 460.5,26.5" fill="none" stroke="#254a8a" stroke-width="1"/><line x1="167.60" y1="72.58" x2="167.60" y2="153.50" stroke="#254a8a" stroke-width="1.8"/><line x1="276.40" y1="54.66" x2="276.40" y2="153.50" stroke="#254a8a" stroke-width="1.8"/><line x1="414.20" y1="96.90" x2="414.20" y2="128.90" stroke="#254a8a" stroke-width="1.8"/><line x1="414.20" y1="128.90" x2="414.20" y2="141.70" stroke="#254a8a" stroke-width="1"/></svg>
<div class="t" style="left:17px;top:503px;font-size:7.3px;font-weight:bold;color:#222;letter-spacing:-0.15px">20Hz</div>
<div class="t" style="left:118px;top:503px;font-size:7.3px;font-weight:bold;color:#222;letter-spacing:-0.15px">100Hz</div>
<div class="t" style="left:272px;top:503px;font-size:7.3px;font-weight:bold;color:#222;letter-spacing:-0.15px">1KHz</div>
<div class="t" style="left:422px;top:503px;font-size:7.3px;font-weight:bold;color:#222;letter-spacing:-0.15px">10KHz</div>
<div style="position:absolute;left:479.3px;top:352.2px;width:1.6px;height:1.6px;background:#111"></div>
<div class="t" style="left:481px;top:349.7px;font-size:7px;font-weight:bold;color:#111;letter-spacing:-0.6px">10</div>
<div class="t" style="left:480.3px;top:369px;font-size:7px;font-weight:bold;color:#111;letter-spacing:-0.6px">0</div>
<div class="t" style="left:479.2px;top:395px;font-size:7px;font-weight:bold;color:#111;letter-spacing:-0.6px">-10</div>
<div class="t" style="left:479.2px;top:420px;font-size:7px;font-weight:bold;color:#111;letter-spacing:-0.6px">-20</div>
<div class="t" style="left:479.2px;top:446px;font-size:7px;font-weight:bold;color:#111;letter-spacing:-0.6px">-30</div>
<div class="t" style="left:479.2px;top:471px;font-size:7px;font-weight:bold;color:#111;letter-spacing:-0.6px">-40</div>
<div class="t" style="left:479.2px;top:497px;font-size:7px;font-weight:bold;color:#111;letter-spacing:-0.6px">-50</div>
<div style="position:absolute;left:497px;top:340px;width:167px;height:175px;border:1px solid #8a8a8a;box-sizing:border-box"></div>
<div style="position:absolute;left:498px;top:341px;width:167px;height:175px;border:1px solid #fff;box-sizing:border-box"></div>
<div style="position:absolute;left:504px;top:349px;width:31px;height:13px;background:#fff;border-top:1.5px solid #484848;border-left:2px solid #505050;border-bottom:1px solid #e4e4e4;box-sizing:border-box"></div>
<div class="t" style="left:504.5px;top:350.5px;width:31px;text-align:center;font-size:10px;color:#8c8c8c;transform:scaleX(0.84)">1272</div>
<div style="position:absolute;left:535px;top:349px;width:9px;height:13px;background:#d9d9d9;border-top:1px solid #c8c8c8;border-left:1px solid #f6f6f6;border-bottom:1px solid #c4c4c4;box-sizing:border-box"></div>
<div style="position:absolute;left:544px;top:349px;width:1px;height:13px;background:#505050"></div>
<svg style="position:absolute;left:535px;top:349px" width="9" height="13"><path d="M5.8 4.7L3.3 7.0L5.8 9.3z" fill="#a4a4a4"/></svg>
<div style="position:absolute;left:545px;top:349px;width:9px;height:13px;background:#d9d9d9;border-top:1px solid #c8c8c8;border-left:1px solid #f6f6f6;border-bottom:1px solid #c4c4c4;box-sizing:border-box"></div>
<div style="position:absolute;left:554px;top:349px;width:1px;height:13px;background:#505050"></div>
<svg style="position:absolute;left:545px;top:349px" width="9" height="13"><path d="M3.7 4.7L6.2 7.0L3.7 9.3z" fill="#a4a4a4"/></svg>
<div style="position:absolute;left:504px;top:362px;width:31px;height:12px;background:#fff;border-top:1.5px solid #484848;border-left:2px solid #505050;border-bottom:1px solid #e4e4e4;box-sizing:border-box"></div>
<div class="t" style="left:504.5px;top:363.5px;width:31px;text-align:center;font-size:10px;color:#8c8c8c;transform:scaleX(0.84)">1272</div>
<div style="position:absolute;left:535px;top:362px;width:9px;height:12px;background:#d9d9d9;border-top:1px solid #c8c8c8;border-left:1px solid #f6f6f6;border-bottom:1px solid #c4c4c4;box-sizing:border-box"></div>
<div style="position:absolute;left:544px;top:362px;width:1px;height:12px;background:#505050"></div>
<svg style="position:absolute;left:535px;top:362px" width="9" height="12"><path d="M5.8 4.2L3.3 6.5L5.8 8.8z" fill="#a4a4a4"/></svg>
<div style="position:absolute;left:545px;top:362px;width:9px;height:12px;background:#d9d9d9;border-top:1px solid #c8c8c8;border-left:1px solid #f6f6f6;border-bottom:1px solid #c4c4c4;box-sizing:border-box"></div>
<div style="position:absolute;left:554px;top:362px;width:1px;height:12px;background:#505050"></div>
<svg style="position:absolute;left:545px;top:362px" width="9" height="12"><path d="M3.7 4.2L6.2 6.5L3.7 8.8z" fill="#a4a4a4"/></svg>
<div style="position:absolute;left:504px;top:374px;width:31px;height:13px;background:#fff;border-top:1.5px solid #484848;border-left:2px solid #505050;border-bottom:1px solid #e4e4e4;box-sizing:border-box"></div>
<div class="t" style="left:504.5px;top:375.5px;width:31px;text-align:center;font-size:10px;color:#8c8c8c;transform:scaleX(0.84)">1272</div>
<div style="position:absolute;left:535px;top:374px;width:9px;height:13px;background:#d9d9d9;border-top:1px solid #c8c8c8;border-left:1px solid #f6f6f6;border-bottom:1px solid #c4c4c4;box-sizing:border-box"></div>
<div style="position:absolute;left:544px;top:374px;width:1px;height:13px;background:#505050"></div>
<svg style="position:absolute;left:535px;top:374px" width="9" height="13"><path d="M5.8 4.7L3.3 7.0L5.8 9.3z" fill="#a4a4a4"/></svg>
<div style="position:absolute;left:545px;top:374px;width:9px;height:13px;background:#d9d9d9;border-top:1px solid #c8c8c8;border-left:1px solid #f6f6f6;border-bottom:1px solid #c4c4c4;box-sizing:border-box"></div>
<div style="position:absolute;left:554px;top:374px;width:1px;height:13px;background:#505050"></div>
<svg style="position:absolute;left:545px;top:374px" width="9" height="13"><path d="M3.7 4.7L6.2 7.0L3.7 9.3z" fill="#a4a4a4"/></svg>
<div style="position:absolute;left:504px;top:387px;width:31px;height:13px;background:#fff;border-top:1.5px solid #484848;border-left:2px solid #505050;border-bottom:1px solid #e4e4e4;box-sizing:border-box"></div>
<div class="t" style="left:504.5px;top:388.5px;width:31px;text-align:center;font-size:10px;color:#8c8c8c;transform:scaleX(0.84)">1272</div>
<div style="position:absolute;left:535px;top:387px;width:9px;height:13px;background:#d9d9d9;border-top:1px solid #c8c8c8;border-left:1px solid #f6f6f6;border-bottom:1px solid #c4c4c4;box-sizing:border-box"></div>
<div style="position:absolute;left:544px;top:387px;width:1px;height:13px;background:#505050"></div>
<svg style="position:absolute;left:535px;top:387px" width="9" height="13"><path d="M5.8 4.7L3.3 7.0L5.8 9.3z" fill="#a4a4a4"/></svg>
<div style="position:absolute;left:545px;top:387px;width:9px;height:13px;background:#d9d9d9;border-top:1px solid #c8c8c8;border-left:1px solid #f6f6f6;border-bottom:1px solid #c4c4c4;box-sizing:border-box"></div>
<div style="position:absolute;left:554px;top:387px;width:1px;height:13px;background:#505050"></div>
<svg style="position:absolute;left:545px;top:387px" width="9" height="13"><path d="M3.7 4.7L6.2 7.0L3.7 9.3z" fill="#a4a4a4"/></svg>
<div style="position:absolute;left:504px;top:400px;width:31px;height:13px;background:#fff;border-top:1.5px solid #484848;border-left:2px solid #505050;border-bottom:1px solid #e4e4e4;box-sizing:border-box"></div>
<div class="t" style="left:504.5px;top:401.5px;width:31px;text-align:center;font-size:10px;color:#8c8c8c;transform:scaleX(0.84)">1272</div>
<div style="position:absolute;left:535px;top:400px;width:9px;height:13px;background:#d9d9d9;border-top:1px solid #c8c8c8;border-left:1px solid #f6f6f6;border-bottom:1px solid #c4c4c4;box-sizing:border-box"></div>
<div style="position:absolute;left:544px;top:400px;width:1px;height:13px;background:#505050"></div>
<svg style="position:absolute;left:535px;top:400px" width="9" height="13"><path d="M5.8 4.7L3.3 7.0L5.8 9.3z" fill="#a4a4a4"/></svg>
<div style="position:absolute;left:545px;top:400px;width:9px;height:13px;background:#d9d9d9;border-top:1px solid #c8c8c8;border-left:1px solid #f6f6f6;border-bottom:1px solid #c4c4c4;box-sizing:border-box"></div>
<div style="position:absolute;left:554px;top:400px;width:1px;height:13px;background:#505050"></div>
<svg style="position:absolute;left:545px;top:400px" width="9" height="13"><path d="M3.7 4.7L6.2 7.0L3.7 9.3z" fill="#a4a4a4"/></svg>
<div style="position:absolute;left:504px;top:413px;width:31px;height:13px;background:#fff;border-top:1.5px solid #484848;border-left:2px solid #505050;border-bottom:1px solid #e4e4e4;box-sizing:border-box"></div>
<div class="t" style="left:504.5px;top:414.5px;width:31px;text-align:center;font-size:10px;color:#8c8c8c;transform:scaleX(0.84)">1272</div>
<div style="position:absolute;left:535px;top:413px;width:9px;height:13px;background:#d9d9d9;border-top:1px solid #c8c8c8;border-left:1px solid #f6f6f6;border-bottom:1px solid #c4c4c4;box-sizing:border-box"></div>
<div style="position:absolute;left:544px;top:413px;width:1px;height:13px;background:#505050"></div>
<svg style="position:absolute;left:535px;top:413px" width="9" height="13"><path d="M5.8 4.7L3.3 7.0L5.8 9.3z" fill="#a4a4a4"/></svg>
<div style="position:absolute;left:545px;top:413px;width:9px;height:13px;background:#d9d9d9;border-top:1px solid #c8c8c8;border-left:1px solid #f6f6f6;border-bottom:1px solid #c4c4c4;box-sizing:border-box"></div>
<div style="position:absolute;left:554px;top:413px;width:1px;height:13px;background:#505050"></div>
<svg style="position:absolute;left:545px;top:413px" width="9" height="13"><path d="M3.7 4.7L6.2 7.0L3.7 9.3z" fill="#a4a4a4"/></svg>
<div style="position:absolute;left:504px;top:426px;width:31px;height:12px;background:#fff;border-top:1.5px solid #484848;border-left:2px solid #505050;border-bottom:1px solid #e4e4e4;box-sizing:border-box"></div>
<div class="t" style="left:504.5px;top:427.5px;width:31px;text-align:center;font-size:10px;color:#8c8c8c;transform:scaleX(0.84)">1272</div>
<div style="position:absolute;left:535px;top:426px;width:9px;height:12px;background:#d9d9d9;border-top:1px solid #c8c8c8;border-left:1px solid #f6f6f6;border-bottom:1px solid #c4c4c4;box-sizing:border-box"></div>
<div style="position:absolute;left:544px;top:426px;width:1px;height:12px;background:#505050"></div>
<svg style="position:absolute;left:535px;top:426px" width="9" height="12"><path d="M5.8 4.2L3.3 6.5L5.8 8.8z" fill="#a4a4a4"/></svg>
<div style="position:absolute;left:545px;top:426px;width:9px;height:12px;background:#d9d9d9;border-top:1px solid #c8c8c8;border-left:1px solid #f6f6f6;border-bottom:1px solid #c4c4c4;box-sizing:border-box"></div>
<div style="position:absolute;left:554px;top:426px;width:1px;height:12px;background:#505050"></div>
<svg style="position:absolute;left:545px;top:426px" width="9" height="12"><path d="M3.7 4.2L6.2 6.5L3.7 8.8z" fill="#a4a4a4"/></svg>
<div style="position:absolute;left:504px;top:438px;width:31px;height:13px;background:#fff;border-top:1.5px solid #484848;border-left:2px solid #505050;border-bottom:1px solid #e4e4e4;box-sizing:border-box"></div>
<div class="t" style="left:504.5px;top:439.5px;width:31px;text-align:center;font-size:10px;color:#8c8c8c;transform:scaleX(0.84)">1272</div>
<div style="position:absolute;left:535px;top:438px;width:9px;height:13px;background:#d9d9d9;border-top:1px solid #c8c8c8;border-left:1px solid #f6f6f6;border-bottom:1px solid #c4c4c4;box-sizing:border-box"></div>
<div style="position:absolute;left:544px;top:438px;width:1px;height:13px;background:#505050"></div>
<svg style="position:absolute;left:535px;top:438px" width="9" height="13"><path d="M5.8 4.7L3.3 7.0L5.8 9.3z" fill="#a4a4a4"/></svg>
<div style="position:absolute;left:545px;top:438px;width:9px;height:13px;background:#d9d9d9;border-top:1px solid #c8c8c8;border-left:1px solid #f6f6f6;border-bottom:1px solid #c4c4c4;box-sizing:border-box"></div>
<div style="position:absolute;left:554px;top:438px;width:1px;height:13px;background:#505050"></div>
<svg style="position:absolute;left:545px;top:438px" width="9" height="13"><path d="M3.7 4.7L6.2 7.0L3.7 9.3z" fill="#a4a4a4"/></svg>
<div style="position:absolute;left:504px;top:451px;width:31px;height:13px;background:#fff;border-top:1.5px solid #484848;border-left:2px solid #505050;border-bottom:1px solid #e4e4e4;box-sizing:border-box"></div>
<div class="t" style="left:504.5px;top:452.5px;width:31px;text-align:center;font-size:10px;color:#000;transform:scaleX(0.84)">247,9</div>
<div style="position:absolute;left:535px;top:451px;width:9px;height:13px;background:#d9d9d9;border-top:1px solid #c8c8c8;border-left:1px solid #f6f6f6;border-bottom:1px solid #c4c4c4;box-sizing:border-box"></div>
<div style="position:absolute;left:544px;top:451px;width:1px;height:13px;background:#505050"></div>
<svg style="position:absolute;left:535px;top:451px" width="9" height="13"><path d="M5.8 4.7L3.3 7.0L5.8 9.3z" fill="#000"/></svg>
<div style="position:absolute;left:545px;top:451px;width:9px;height:13px;background:#d9d9d9;border-top:1px solid #c8c8c8;border-left:1px solid #f6f6f6;border-bottom:1px solid #c4c4c4;box-sizing:border-box"></div>
<div style="position:absolute;left:554px;top:451px;width:1px;height:13px;background:#505050"></div>
<svg style="position:absolute;left:545px;top:451px" width="9" height="13"><path d="M3.7 4.7L6.2 7.0L3.7 9.3z" fill="#000"/></svg>
<div style="position:absolute;left:504px;top:464px;width:31px;height:13px;background:#fff;border-top:1.5px solid #484848;border-left:2px solid #505050;border-bottom:1px solid #e4e4e4;box-sizing:border-box"></div>
<div class="t" style="left:504.5px;top:465.5px;width:31px;text-align:center;font-size:10px;color:#000;transform:scaleX(0.84)">247,9</div>
<div style="position:absolute;left:535px;top:464px;width:9px;height:13px;background:#d9d9d9;border-top:1px solid #c8c8c8;border-left:1px solid #f6f6f6;border-bottom:1px solid #c4c4c4;box-sizing:border-box"></div>
<div style="position:absolute;left:544px;top:464px;width:1px;height:13px;background:#505050"></div>
<svg style="position:absolute;left:535px;top:464px" width="9" height="13"><path d="M5.8 4.7L3.3 7.0L5.8 9.3z" fill="#000"/></svg>
<div style="position:absolute;left:545px;top:464px;width:9px;height:13px;background:#d9d9d9;border-top:1px solid #c8c8c8;border-left:1px solid #f6f6f6;border-bottom:1px solid #c4c4c4;box-sizing:border-box"></div>
<div style="position:absolute;left:554px;top:464px;width:1px;height:13px;background:#505050"></div>
<svg style="position:absolute;left:545px;top:464px" width="9" height="13"><path d="M3.7 4.7L6.2 7.0L3.7 9.3z" fill="#000"/></svg>
<div style="position:absolute;left:504px;top:477px;width:31px;height:13px;background:#fff;border-top:1.5px solid #484848;border-left:2px solid #505050;border-bottom:1px solid #e4e4e4;box-sizing:border-box"></div>
<div class="t" style="left:504.5px;top:478.5px;width:31px;text-align:center;font-size:10px;color:#000;transform:scaleX(0.84)">247,9</div>
<div style="position:absolute;left:535px;top:477px;width:9px;height:13px;background:#d9d9d9;border-top:1px solid #c8c8c8;border-left:1px solid #f6f6f6;border-bottom:1px solid #c4c4c4;box-sizing:border-box"></div>
<div style="position:absolute;left:544px;top:477px;width:1px;height:13px;background:#505050"></div>
<svg style="position:absolute;left:535px;top:477px" width="9" height="13"><path d="M5.8 4.7L3.3 7.0L5.8 9.3z" fill="#000"/></svg>
<div style="position:absolute;left:545px;top:477px;width:9px;height:13px;background:#d9d9d9;border-top:1px solid #c8c8c8;border-left:1px solid #f6f6f6;border-bottom:1px solid #c4c4c4;box-sizing:border-box"></div>
<div style="position:absolute;left:554px;top:477px;width:1px;height:13px;background:#505050"></div>
<svg style="position:absolute;left:545px;top:477px" width="9" height="13"><path d="M3.7 4.7L6.2 7.0L3.7 9.3z" fill="#000"/></svg>
<div style="position:absolute;left:504px;top:490px;width:31px;height:12px;background:#fff;border-top:1.5px solid #484848;border-left:2px solid #505050;border-bottom:1px solid #e4e4e4;box-sizing:border-box"></div>
<div class="t" style="left:504.5px;top:491.5px;width:31px;text-align:center;font-size:10px;color:#000;transform:scaleX(0.84)">10015</div>
<div style="position:absolute;left:535px;top:490px;width:9px;height:12px;background:#d9d9d9;border-top:1px solid #c8c8c8;border-left:1px solid #f6f6f6;border-bottom:1px solid #c4c4c4;box-sizing:border-box"></div>
<div style="position:absolute;left:544px;top:490px;width:1px;height:12px;background:#505050"></div>
<svg style="position:absolute;left:535px;top:490px" width="9" height="12"><path d="M5.8 4.2L3.3 6.5L5.8 8.8z" fill="#000"/></svg>
<div style="position:absolute;left:545px;top:490px;width:9px;height:12px;background:#d9d9d9;border-top:1px solid #c8c8c8;border-left:1px solid #f6f6f6;border-bottom:1px solid #c4c4c4;box-sizing:border-box"></div>
<div style="position:absolute;left:554px;top:490px;width:1px;height:12px;background:#505050"></div>
<svg style="position:absolute;left:545px;top:490px" width="9" height="12"><path d="M3.7 4.2L6.2 6.5L3.7 8.8z" fill="#000"/></svg>
<div style="position:absolute;left:535px;top:502px;width:20px;height:1px;background:#505050"></div>
<div style="position:absolute;left:561px;top:349px;width:25px;height:13px;background:#fff;border-top:1.5px solid #484848;border-left:2px solid #505050;border-bottom:1px solid #e4e4e4;box-sizing:border-box"></div>
<div class="t" style="left:561.5px;top:350.5px;width:25px;text-align:center;font-size:10px;color:#8c8c8c;transform:scaleX(0.84)">-10</div>
<div style="position:absolute;left:586px;top:349px;width:9px;height:13px;background:#d9d9d9;border-top:1px solid #c8c8c8;border-left:1px solid #f6f6f6;border-bottom:1px solid #c4c4c4;box-sizing:border-box"></div>
<div style="position:absolute;left:595px;top:349px;width:1px;height:13px;background:#505050"></div>
<svg style="position:absolute;left:586px;top:349px" width="9" height="13"><path d="M5.8 4.7L3.3 7.0L5.8 9.3z" fill="#a4a4a4"/></svg>
<div style="position:absolute;left:596px;top:349px;width:9px;height:13px;background:#d9d9d9;border-top:1px solid #c8c8c8;border-left:1px solid #f6f6f6;border-bottom:1px solid #c4c4c4;box-sizing:border-box"></div>
<div style="position:absolute;left:605px;top:349px;width:1px;height:13px;background:#505050"></div>
<svg style="position:absolute;left:596px;top:349px" width="9" height="13"><path d="M3.7 4.7L6.2 7.0L3.7 9.3z" fill="#a4a4a4"/></svg>
<div style="position:absolute;left:561px;top:362px;width:25px;height:12px;background:#fff;border-top:1.5px solid #484848;border-left:2px solid #505050;border-bottom:1px solid #e4e4e4;box-sizing:border-box"></div>
<div class="t" style="left:561.5px;top:363.5px;width:25px;text-align:center;font-size:10px;color:#8c8c8c;transform:scaleX(0.84)">-10</div>
<div style="position:absolute;left:586px;top:362px;width:9px;height:12px;background:#d9d9d9;border-top:1px solid #c8c8c8;border-left:1px solid #f6f6f6;border-bottom:1px solid #c4c4c4;box-sizing:border-box"></div>
<div style="position:absolute;left:595px;top:362px;width:1px;height:12px;background:#505050"></div>
<svg style="position:absolute;left:586px;top:362px" width="9" height="12"><path d="M5.8 4.2L3.3 6.5L5.8 8.8z" fill="#a4a4a4"/></svg>
<div style="position:absolute;left:596px;top:362px;width:9px;height:12px;background:#d9d9d9;border-top:1px solid #c8c8c8;border-left:1px solid #f6f6f6;border-bottom:1px solid #c4c4c4;box-sizing:border-box"></div>
<div style="position:absolute;left:605px;top:362px;width:1px;height:12px;background:#505050"></div>
<svg style="position:absolute;left:596px;top:362px" width="9" height="12"><path d="M3.7 4.2L6.2 6.5L3.7 8.8z" fill="#a4a4a4"/></svg>
<div style="position:absolute;left:561px;top:374px;width:25px;height:13px;background:#fff;border-top:1.5px solid #484848;border-left:2px solid #505050;border-bottom:1px solid #e4e4e4;box-sizing:border-box"></div>
<div class="t" style="left:561.5px;top:375.5px;width:25px;text-align:center;font-size:10px;color:#8c8c8c;transform:scaleX(0.84)">-10</div>
<div style="position:absolute;left:586px;top:374px;width:9px;height:13px;background:#d9d9d9;border-top:1px solid #c8c8c8;border-left:1px solid #f6f6f6;border-bottom:1px solid #c4c4c4;box-sizing:border-box"></div>
<div style="position:absolute;left:595px;top:374px;width:1px;height:13px;background:#505050"></div>
<svg style="position:absolute;left:586px;top:374px" width="9" height="13"><path d="M5.8 4.7L3.3 7.0L5.8 9.3z" fill="#a4a4a4"/></svg>
<div style="position:absolute;left:596px;top:374px;width:9px;height:13px;background:#d9d9d9;border-top:1px solid #c8c8c8;border-left:1px solid #f6f6f6;border-bottom:1px solid #c4c4c4;box-sizing:border-box"></div>
<div style="position:absolute;left:605px;top:374px;width:1px;height:13px;background:#505050"></div>
<svg style="position:absolute;left:596px;top:374px" width="9" height="13"><path d="M3.7 4.7L6.2 7.0L3.7 9.3z" fill="#a4a4a4"/></svg>
<div style="position:absolute;left:561px;top:387px;width:25px;height:13px;background:#fff;border-top:1.5px solid #484848;border-left:2px solid #505050;border-bottom:1px solid #e4e4e4;box-sizing:border-box"></div>
<div class="t" style="left:561.5px;top:388.5px;width:25px;text-align:center;font-size:10px;color:#8c8c8c;transform:scaleX(0.84)">-10</div>
<div style="position:absolute;left:586px;top:387px;width:9px;height:13px;background:#d9d9d9;border-top:1px solid #c8c8c8;border-left:1px solid #f6f6f6;border-bottom:1px solid #c4c4c4;box-sizing:border-box"></div>
<div style="position:absolute;left:595px;top:387px;width:1px;height:13px;background:#505050"></div>
<svg style="position:absolute;left:586px;top:387px" width="9" height="13"><path d="M5.8 4.7L3.3 7.0L5.8 9.3z" fill="#a4a4a4"/></svg>
<div style="position:absolute;left:596px;top:387px;width:9px;height:13px;background:#d9d9d9;border-top:1px solid #c8c8c8;border-left:1px solid #f6f6f6;border-bottom:1px solid #c4c4c4;box-sizing:border-box"></div>
<div style="position:absolute;left:605px;top:387px;width:1px;height:13px;background:#505050"></div>
<svg style="position:absolute;left:596px;top:387px" width="9" height="13"><path d="M3.7 4.7L6.2 7.0L3.7 9.3z" fill="#a4a4a4"/></svg>
<div style="position:absolute;left:561px;top:400px;width:25px;height:13px;background:#fff;border-top:1.5px solid #484848;border-left:2px solid #505050;border-bottom:1px solid #e4e4e4;box-sizing:border-box"></div>
<div class="t" style="left:561.5px;top:401.5px;width:25px;text-align:center;font-size:10px;color:#8c8c8c;transform:scaleX(0.84)">-10</div>
<div style="position:absolute;left:586px;top:400px;width:9px;height:13px;background:#d9d9d9;border-top:1px solid #c8c8c8;border-left:1px solid #f6f6f6;border-bottom:1px solid #c4c4c4;box-sizing:border-box"></div>
<div style="position:absolute;left:595px;top:400px;width:1px;height:13px;background:#505050"></div>
<svg style="position:absolute;left:586px;top:400px" width="9" height="13"><path d="M5.8 4.7L3.3 7.0L5.8 9.3z" fill="#a4a4a4"/></svg>
<div style="position:absolute;left:596px;top:400px;width:9px;height:13px;background:#d9d9d9;border-top:1px solid #c8c8c8;border-left:1px solid #f6f6f6;border-bottom:1px solid #c4c4c4;box-sizing:border-box"></div>
<div style="position:absolute;left:605px;top:400px;width:1px;height:13px;background:#505050"></div>
<svg style="position:absolute;left:596px;top:400px" width="9" height="13"><path d="M3.7 4.7L6.2 7.0L3.7 9.3z" fill="#a4a4a4"/></svg>
<div style="position:absolute;left:561px;top:413px;width:25px;height:13px;background:#fff;border-top:1.5px solid #484848;border-left:2px solid #505050;border-bottom:1px solid #e4e4e4;box-sizing:border-box"></div>
<div class="t" style="left:561.5px;top:414.5px;width:25px;text-align:center;font-size:10px;color:#8c8c8c;transform:scaleX(0.84)">-10</div>
<div style="position:absolute;left:586px;top:413px;width:9px;height:13px;background:#d9d9d9;border-top:1px solid #c8c8c8;border-left:1px solid #f6f6f6;border-bottom:1px solid #c4c4c4;box-sizing:border-box"></div>
<div style="position:absolute;left:595px;top:413px;width:1px;height:13px;background:#505050"></div>
<svg style="position:absolute;left:586px;top:413px" width="9" height="13"><path d="M5.8 4.7L3.3 7.0L5.8 9.3z" fill="#a4a4a4"/></svg>
<div style="position:absolute;left:596px;top:413px;width:9px;height:13px;background:#d9d9d9;border-top:1px solid #c8c8c8;border-left:1px solid #f6f6f6;border-bottom:1px solid #c4c4c4;box-sizing:border-box"></div>
<div style="position:absolute;left:605px;top:413px;width:1px;height:13px;background:#505050"></div>
<svg style="position:absolute;left:596px;top:413px" width="9" height="13"><path d="M3.7 4.7L6.2 7.0L3.7 9.3z" fill="#a4a4a4"/></svg>
<div style="position:absolute;left:561px;top:426px;width:25px;height:12px;background:#fff;border-top:1.5px solid #484848;border-left:2px solid #505050;border-bottom:1px solid #e4e4e4;box-sizing:border-box"></div>
<div class="t" style="left:561.5px;top:427.5px;width:25px;text-align:center;font-size:10px;color:#8c8c8c;transform:scaleX(0.84)">-10</div>
<div style="position:absolute;left:586px;top:426px;width:9px;height:12px;background:#d9d9d9;border-top:1px solid #c8c8c8;border-left:1px solid #f6f6f6;border-bottom:1px solid #c4c4c4;box-sizing:border-box"></div>
<div style="position:absolute;left:595px;top:426px;width:1px;height:12px;background:#505050"></div>
<svg style="position:absolute;left:586px;top:426px" width="9" height="12"><path d="M5.8 4.2L3.3 6.5L5.8 8.8z" fill="#a4a4a4"/></svg>
<div style="position:absolute;left:596px;top:426px;width:9px;height:12px;background:#d9d9d9;border-top:1px solid #c8c8c8;border-left:1px solid #f6f6f6;border-bottom:1px solid #c4c4c4;box-sizing:border-box"></div>
<div style="position:absolute;left:605px;top:426px;width:1px;height:12px;background:#505050"></div>
<svg style="position:absolute;left:596px;top:426px" width="9" height="12"><path d="M3.7 4.2L6.2 6.5L3.7 8.8z" fill="#a4a4a4"/></svg>
<div style="position:absolute;left:561px;top:438px;width:25px;height:13px;background:#fff;border-top:1.5px solid #484848;border-left:2px solid #505050;border-bottom:1px solid #e4e4e4;box-sizing:border-box"></div>
<div class="t" style="left:561.5px;top:439.5px;width:25px;text-align:center;font-size:10px;color:#8c8c8c;transform:scaleX(0.84)">-10</div>
<div style="position:absolute;left:586px;top:438px;width:9px;height:13px;background:#d9d9d9;border-top:1px solid #c8c8c8;border-left:1px solid #f6f6f6;border-bottom:1px solid #c4c4c4;box-sizing:border-box"></div>
<div style="position:absolute;left:595px;top:438px;width:1px;height:13px;background:#505050"></div>
<svg style="position:absolute;left:586px;top:438px" width="9" height="13"><path d="M5.8 4.7L3.3 7.0L5.8 9.3z" fill="#a4a4a4"/></svg>
<div style="position:absolute;left:596px;top:438px;width:9px;height:13px;background:#d9d9d9;border-top:1px solid #c8c8c8;border-left:1px solid #f6f6f6;border-bottom:1px solid #c4c4c4;box-sizing:border-box"></div>
<div style="position:absolute;left:605px;top:438px;width:1px;height:13px;background:#505050"></div>
<svg style="position:absolute;left:596px;top:438px" width="9" height="13"><path d="M3.7 4.7L6.2 7.0L3.7 9.3z" fill="#a4a4a4"/></svg>
<div style="position:absolute;left:561px;top:451px;width:25px;height:13px;background:#fff;border-top:1.5px solid #484848;border-left:2px solid #505050;border-bottom:1px solid #e4e4e4;box-sizing:border-box"></div>
<div class="t" style="left:561.5px;top:452.5px;width:25px;text-align:center;font-size:10px;color:#000;transform:scaleX(0.84)">-45</div>
<div style="position:absolute;left:586px;top:451px;width:9px;height:13px;background:#d9d9d9;border-top:1px solid #c8c8c8;border-left:1px solid #f6f6f6;border-bottom:1px solid #c4c4c4;box-sizing:border-box"></div>
<div style="position:absolute;left:595px;top:451px;width:1px;height:13px;background:#505050"></div>
<svg style="position:absolute;left:586px;top:451px" width="9" height="13"><path d="M5.8 4.7L3.3 7.0L5.8 9.3z" fill="#000"/></svg>
<div style="position:absolute;left:596px;top:451px;width:9px;height:13px;background:#d9d9d9;border-top:1px solid #c8c8c8;border-left:1px solid #f6f6f6;border-bottom:1px solid #c4c4c4;box-sizing:border-box"></div>
<div style="position:absolute;left:605px;top:451px;width:1px;height:13px;background:#505050"></div>
<svg style="position:absolute;left:596px;top:451px" width="9" height="13"><path d="M3.7 4.7L6.2 7.0L3.7 9.3z" fill="#000"/></svg>
<div style="position:absolute;left:561px;top:464px;width:25px;height:13px;background:#fff;border-top:1.5px solid #484848;border-left:2px solid #505050;border-bottom:1px solid #e4e4e4;box-sizing:border-box"></div>
<div class="t" style="left:561.5px;top:465.5px;width:25px;text-align:center;font-size:10px;color:#000;transform:scaleX(0.84)">-45</div>
<div style="position:absolute;left:586px;top:464px;width:9px;height:13px;background:#d9d9d9;border-top:1px solid #c8c8c8;border-left:1px solid #f6f6f6;border-bottom:1px solid #c4c4c4;box-sizing:border-box"></div>
<div style="position:absolute;left:595px;top:464px;width:1px;height:13px;background:#505050"></div>
<svg style="position:absolute;left:586px;top:464px" width="9" height="13"><path d="M5.8 4.7L3.3 7.0L5.8 9.3z" fill="#000"/></svg>
<div style="position:absolute;left:596px;top:464px;width:9px;height:13px;background:#d9d9d9;border-top:1px solid #c8c8c8;border-left:1px solid #f6f6f6;border-bottom:1px solid #c4c4c4;box-sizing:border-box"></div>
<div style="position:absolute;left:605px;top:464px;width:1px;height:13px;background:#505050"></div>
<svg style="position:absolute;left:596px;top:464px" width="9" height="13"><path d="M3.7 4.7L6.2 7.0L3.7 9.3z" fill="#000"/></svg>
<div style="position:absolute;left:561px;top:477px;width:25px;height:13px;background:#fff;border-top:1.5px solid #484848;border-left:2px solid #505050;border-bottom:1px solid #e4e4e4;box-sizing:border-box"></div>
<div class="t" style="left:561.5px;top:478.5px;width:25px;text-align:center;font-size:10px;color:#000;transform:scaleX(0.84)">-45</div>
<div style="position:absolute;left:586px;top:477px;width:9px;height:13px;background:#d9d9d9;border-top:1px solid #c8c8c8;border-left:1px solid #f6f6f6;border-bottom:1px solid #c4c4c4;box-sizing:border-box"></div>
<div style="position:absolute;left:595px;top:477px;width:1px;height:13px;background:#505050"></div>
<svg style="position:absolute;left:586px;top:477px" width="9" height="13"><path d="M5.8 4.7L3.3 7.0L5.8 9.3z" fill="#000"/></svg>
<div style="position:absolute;left:596px;top:477px;width:9px;height:13px;background:#d9d9d9;border-top:1px solid #c8c8c8;border-left:1px solid #f6f6f6;border-bottom:1px solid #c4c4c4;box-sizing:border-box"></div>
<div style="position:absolute;left:605px;top:477px;width:1px;height:13px;background:#505050"></div>
<svg style="position:absolute;left:596px;top:477px" width="9" height="13"><path d="M3.7 4.7L6.2 7.0L3.7 9.3z" fill="#000"/></svg>
<div style="position:absolute;left:561px;top:490px;width:25px;height:12px;background:#fff;border-top:1.5px solid #484848;border-left:2px solid #505050;border-bottom:1px solid #e4e4e4;box-sizing:border-box"></div>
<div class="t" style="left:561.5px;top:491.5px;width:25px;text-align:center;font-size:10px;color:#000;transform:scaleX(0.84)">-45</div>
<div style="position:absolute;left:586px;top:490px;width:9px;height:12px;background:#d9d9d9;border-top:1px solid #c8c8c8;border-left:1px solid #f6f6f6;border-bottom:1px solid #c4c4c4;box-sizing:border-box"></div>
<div style="position:absolute;left:595px;top:490px;width:1px;height:12px;background:#505050"></div>
<svg style="position:absolute;left:586px;top:490px" width="9" height="12"><path d="M5.8 4.2L3.3 6.5L5.8 8.8z" fill="#000"/></svg>
<div style="position:absolute;left:596px;top:490px;width:9px;height:12px;background:#d9d9d9;border-top:1px solid #c8c8c8;border-left:1px solid #f6f6f6;border-bottom:1px solid #c4c4c4;box-sizing:border-box"></div>
<div style="position:absolute;left:605px;top:490px;width:1px;height:12px;background:#505050"></div>
<svg style="position:absolute;left:596px;top:490px" width="9" height="12"><path d="M3.7 4.2L6.2 6.5L3.7 8.8z" fill="#000"/></svg>
<div style="position:absolute;left:586px;top:502px;width:20px;height:1px;background:#505050"></div>
<div style="position:absolute;left:613px;top:349px;width:25px;height:13px;background:#fff;border-top:1.5px solid #484848;border-left:2px solid #505050;border-bottom:1px solid #e4e4e4;box-sizing:border-box"></div>
<div class="t" style="left:613.5px;top:350.5px;width:25px;text-align:center;font-size:10px;color:#8c8c8c;transform:scaleX(0.84)">1/70</div>
<div style="position:absolute;left:638px;top:349px;width:9px;height:13px;background:#d9d9d9;border-top:1px solid #c8c8c8;border-left:1px solid #f6f6f6;border-bottom:1px solid #c4c4c4;box-sizing:border-box"></div>
<div style="position:absolute;left:647px;top:349px;width:1px;height:13px;background:#505050"></div>
<svg style="position:absolute;left:638px;top:349px" width="9" height="13"><path d="M5.8 4.7L3.3 7.0L5.8 9.3z" fill="#a4a4a4"/></svg>
<div style="position:absolute;left:648px;top:349px;width:9px;height:13px;background:#d9d9d9;border-top:1px solid #c8c8c8;border-left:1px solid #f6f6f6;border-bottom:1px solid #c4c4c4;box-sizing:border-box"></div>
<div style="position:absolute;left:657px;top:349px;width:1px;height:13px;background:#505050"></div>
<svg style="position:absolute;left:648px;top:349px" width="9" height="13"><path d="M3.7 4.7L6.2 7.0L3.7 9.3z" fill="#a4a4a4"/></svg>
<div style="position:absolute;left:613px;top:362px;width:25px;height:12px;background:#fff;border-top:1.5px solid #484848;border-left:2px solid #505050;border-bottom:1px solid #e4e4e4;box-sizing:border-box"></div>
<div class="t" style="left:613.5px;top:363.5px;width:25px;text-align:center;font-size:10px;color:#8c8c8c;transform:scaleX(0.84)">1/70</div>
<div style="position:absolute;left:638px;top:362px;width:9px;height:12px;background:#d9d9d9;border-top:1px solid #c8c8c8;border-left:1px solid #f6f6f6;border-bottom:1px solid #c4c4c4;box-sizing:border-box"></div>
<div style="position:absolute;left:647px;top:362px;width:1px;height:12px;background:#505050"></div>
<svg style="position:absolute;left:638px;top:362px" width="9" height="12"><path d="M5.8 4.2L3.3 6.5L5.8 8.8z" fill="#a4a4a4"/></svg>
<div style="position:absolute;left:648px;top:362px;width:9px;height:12px;background:#d9d9d9;border-top:1px solid #c8c8c8;border-left:1px solid #f6f6f6;border-bottom:1px solid #c4c4c4;box-sizing:border-box"></div>
<div style="position:absolute;left:657px;top:362px;width:1px;height:12px;background:#505050"></div>
<svg style="position:absolute;left:648px;top:362px" width="9" height="12"><path d="M3.7 4.2L6.2 6.5L3.7 8.8z" fill="#a4a4a4"/></svg>
<div style="position:absolute;left:613px;top:374px;width:25px;height:13px;background:#fff;border-top:1.5px solid #484848;border-left:2px solid #505050;border-bottom:1px solid #e4e4e4;box-sizing:border-box"></div>
<div class="t" style="left:613.5px;top:375.5px;width:25px;text-align:center;font-size:10px;color:#8c8c8c;transform:scaleX(0.84)">1/70</div>
<div style="position:absolute;left:638px;top:374px;width:9px;height:13px;background:#d9d9d9;border-top:1px solid #c8c8c8;border-left:1px solid #f6f6f6;border-bottom:1px solid #c4c4c4;box-sizing:border-box"></div>
<div style="position:absolute;left:647px;top:374px;width:1px;height:13px;background:#505050"></div>
<svg style="position:absolute;left:638px;top:374px" width="9" height="13"><path d="M5.8 4.7L3.3 7.0L5.8 9.3z" fill="#a4a4a4"/></svg>
<div style="position:absolute;left:648px;top:374px;width:9px;height:13px;background:#d9d9d9;border-top:1px solid #c8c8c8;border-left:1px solid #f6f6f6;border-bottom:1px solid #c4c4c4;box-sizing:border-box"></div>
<div style="position:absolute;left:657px;top:374px;width:1px;height:13px;background:#505050"></div>
<svg style="position:absolute;left:648px;top:374px" width="9" height="13"><path d="M3.7 4.7L6.2 7.0L3.7 9.3z" fill="#a4a4a4"/></svg>
<div style="position:absolute;left:613px;top:387px;width:25px;height:13px;background:#fff;border-top:1.5px solid #484848;border-left:2px solid #505050;border-bottom:1px solid #e4e4e4;box-sizing:border-box"></div>
<div class="t" style="left:613.5px;top:388.5px;width:25px;text-align:center;font-size:10px;color:#8c8c8c;transform:scaleX(0.84)">1/70</div>
<div style="position:absolute;left:638px;top:387px;width:9px;height:13px;background:#d9d9d9;border-top:1px solid #c8c8c8;border-left:1px solid #f6f6f6;border-bottom:1px solid #c4c4c4;box-sizing:border-box"></div>
<div style="position:absolute;left:647px;top:387px;width:1px;height:13px;background:#505050"></div>
<svg style="position:absolute;left:638px;top:387px" width="9" height="13"><path d="M5.8 4.7L3.3 7.0L5.8 9.3z" fill="#a4a4a4"/></svg>
<div style="position:absolute;left:648px;top:387px;width:9px;height:13px;background:#d9d9d9;border-top:1px solid #c8c8c8;border-left:1px solid #f6f6f6;border-bottom:1px solid #c4c4c4;box-sizing:border-box"></div>
<div style="position:absolute;left:657px;top:387px;width:1px;height:13px;background:#505050"></div>
<svg style="position:absolute;left:648px;top:387px" width="9" height="13"><path d="M3.7 4.7L6.2 7.0L3.7 9.3z" fill="#a4a4a4"/></svg>
<div style="position:absolute;left:613px;top:400px;width:25px;height:13px;background:#fff;border-top:1.5px solid #484848;border-left:2px solid #505050;border-bottom:1px solid #e4e4e4;box-sizing:border-box"></div>
<div class="t" style="left:613.5px;top:401.5px;width:25px;text-align:center;font-size:10px;color:#8c8c8c;transform:scaleX(0.84)">1/70</div>
<div style="position:absolute;left:638px;top:400px;width:9px;height:13px;background:#d9d9d9;border-top:1px solid #c8c8c8;border-left:1px solid #f6f6f6;border-bottom:1px solid #c4c4c4;box-sizing:border-box"></div>
<div style="position:absolute;left:647px;top:400px;width:1px;height:13px;background:#505050"></div>
<svg style="position:absolute;left:638px;top:400px" width="9" height="13"><path d="M5.8 4.7L3.3 7.0L5.8 9.3z" fill="#a4a4a4"/></svg>
<div style="position:absolute;left:648px;top:400px;width:9px;height:13px;background:#d9d9d9;border-top:1px solid #c8c8c8;border-left:1px solid #f6f6f6;border-bottom:1px solid #c4c4c4;box-sizing:border-box"></div>
<div style="position:absolute;left:657px;top:400px;width:1px;height:13px;background:#505050"></div>
<svg style="position:absolute;left:648px;top:400px" width="9" height="13"><path d="M3.7 4.7L6.2 7.0L3.7 9.3z" fill="#a4a4a4"/></svg>
<div style="position:absolute;left:613px;top:413px;width:25px;height:13px;background:#fff;border-top:1.5px solid #484848;border-left:2px solid #505050;border-bottom:1px solid #e4e4e4;box-sizing:border-box"></div>
<div class="t" style="left:613.5px;top:414.5px;width:25px;text-align:center;font-size:10px;color:#8c8c8c;transform:scaleX(0.84)">1/70</div>
<div style="position:absolute;left:638px;top:413px;width:9px;height:13px;background:#d9d9d9;border-top:1px solid #c8c8c8;border-left:1px solid #f6f6f6;border-bottom:1px solid #c4c4c4;box-sizing:border-box"></div>
<div style="position:absolute;left:647px;top:413px;width:1px;height:13px;background:#505050"></div>
<svg style="position:absolute;left:638px;top:413px" width="9" height="13"><path d="M5.8 4.7L3.3 7.0L5.8 9.3z" fill="#a4a4a4"/></svg>
<div style="position:absolute;left:648px;top:413px;width:9px;height:13px;background:#d9d9d9;border-top:1px solid #c8c8c8;border-left:1px solid #f6f6f6;border-bottom:1px solid #c4c4c4;box-sizing:border-box"></div>
<div style="position:absolute;left:657px;top:413px;width:1px;height:13px;background:#505050"></div>
<svg style="position:absolute;left:648px;top:413px" width="9" height="13"><path d="M3.7 4.7L6.2 7.0L3.7 9.3z" fill="#a4a4a4"/></svg>
<div style="position:absolute;left:613px;top:426px;width:25px;height:12px;background:#fff;border-top:1.5px solid #484848;border-left:2px solid #505050;border-bottom:1px solid #e4e4e4;box-sizing:border-box"></div>
<div class="t" style="left:613.5px;top:427.5px;width:25px;text-align:center;font-size:10px;color:#8c8c8c;transform:scaleX(0.84)">1/70</div>
<div style="position:absolute;left:638px;top:426px;width:9px;height:12px;background:#d9d9d9;border-top:1px solid #c8c8c8;border-left:1px solid #f6f6f6;border-bottom:1px solid #c4c4c4;box-sizing:border-box"></div>
<div style="position:absolute;left:647px;top:426px;width:1px;height:12px;background:#505050"></div>
<svg style="position:absolute;left:638px;top:426px" width="9" height="12"><path d="M5.8 4.2L3.3 6.5L5.8 8.8z" fill="#a4a4a4"/></svg>
<div style="position:absolute;left:648px;top:426px;width:9px;height:12px;background:#d9d9d9;border-top:1px solid #c8c8c8;border-left:1px solid #f6f6f6;border-bottom:1px solid #c4c4c4;box-sizing:border-box"></div>
<div style="position:absolute;left:657px;top:426px;width:1px;height:12px;background:#505050"></div>
<svg style="position:absolute;left:648px;top:426px" width="9" height="12"><path d="M3.7 4.2L6.2 6.5L3.7 8.8z" fill="#a4a4a4"/></svg>
<div style="position:absolute;left:613px;top:438px;width:25px;height:13px;background:#fff;border-top:1.5px solid #484848;border-left:2px solid #505050;border-bottom:1px solid #e4e4e4;box-sizing:border-box"></div>
<div class="t" style="left:613.5px;top:439.5px;width:25px;text-align:center;font-size:10px;color:#8c8c8c;transform:scaleX(0.84)">1/70</div>
<div style="position:absolute;left:638px;top:438px;width:9px;height:13px;background:#d9d9d9;border-top:1px solid #c8c8c8;border-left:1px solid #f6f6f6;border-bottom:1px solid #c4c4c4;box-sizing:border-box"></div>
<div style="position:absolute;left:647px;top:438px;width:1px;height:13px;background:#505050"></div>
<svg style="position:absolute;left:638px;top:438px" width="9" height="13"><path d="M5.8 4.7L3.3 7.0L5.8 9.3z" fill="#a4a4a4"/></svg>
<div style="position:absolute;left:648px;top:438px;width:9px;height:13px;background:#d9d9d9;border-top:1px solid #c8c8c8;border-left:1px solid #f6f6f6;border-bottom:1px solid #c4c4c4;box-sizing:border-box"></div>
<div style="position:absolute;left:657px;top:438px;width:1px;height:13px;background:#505050"></div>
<svg style="position:absolute;left:648px;top:438px" width="9" height="13"><path d="M3.7 4.7L6.2 7.0L3.7 9.3z" fill="#a4a4a4"/></svg>
<div style="position:absolute;left:613px;top:451px;width:25px;height:13px;background:#fff;border-top:1.5px solid #484848;border-left:2px solid #505050;border-bottom:1px solid #e4e4e4;box-sizing:border-box"></div>
<div class="t" style="left:613.5px;top:452.5px;width:25px;text-align:center;font-size:10px;color:#000;transform:scaleX(0.84)">1/70</div>
<div style="position:absolute;left:638px;top:451px;width:9px;height:13px;background:#d9d9d9;border-top:1px solid #c8c8c8;border-left:1px solid #f6f6f6;border-bottom:1px solid #c4c4c4;box-sizing:border-box"></div>
<div style="position:absolute;left:647px;top:451px;width:1px;height:13px;background:#505050"></div>
<svg style="position:absolute;left:638px;top:451px" width="9" height="13"><path d="M5.8 4.7L3.3 7.0L5.8 9.3z" fill="#000"/></svg>
<div style="position:absolute;left:648px;top:451px;width:9px;height:13px;background:#d9d9d9;border-top:1px solid #c8c8c8;border-left:1px solid #f6f6f6;border-bottom:1px solid #c4c4c4;box-sizing:border-box"></div>
<div style="position:absolute;left:657px;top:451px;width:1px;height:13px;background:#505050"></div>
<svg style="position:absolute;left:648px;top:451px" width="9" height="13"><path d="M3.7 4.7L6.2 7.0L3.7 9.3z" fill="#000"/></svg>
<div style="position:absolute;left:613px;top:464px;width:25px;height:13px;background:#fff;border-top:1.5px solid #484848;border-left:2px solid #505050;border-bottom:1px solid #e4e4e4;box-sizing:border-box"></div>
<div class="t" style="left:613.5px;top:465.5px;width:25px;text-align:center;font-size:10px;color:#000;transform:scaleX(0.84)">1/70</div>
<div style="position:absolute;left:638px;top:464px;width:9px;height:13px;background:#d9d9d9;border-top:1px solid #c8c8c8;border-left:1px solid #f6f6f6;border-bottom:1px solid #c4c4c4;box-sizing:border-box"></div>
<div style="position:absolute;left:647px;top:464px;width:1px;height:13px;background:#505050"></div>
<svg style="position:absolute;left:638px;top:464px" width="9" height="13"><path d="M5.8 4.7L3.3 7.0L5.8 9.3z" fill="#000"/></svg>
<div style="position:absolute;left:648px;top:464px;width:9px;height:13px;background:#d9d9d9;border-top:1px solid #c8c8c8;border-left:1px solid #f6f6f6;border-bottom:1px solid #c4c4c4;box-sizing:border-box"></div>
<div style="position:absolute;left:657px;top:464px;width:1px;height:13px;background:#505050"></div>
<svg style="position:absolute;left:648px;top:464px" width="9" height="13"><path d="M3.7 4.7L6.2 7.0L3.7 9.3z" fill="#000"/></svg>
<div style="position:absolute;left:613px;top:477px;width:25px;height:13px;background:#fff;border-top:1.5px solid #484848;border-left:2px solid #505050;border-bottom:1px solid #e4e4e4;box-sizing:border-box"></div>
<div class="t" style="left:613.5px;top:478.5px;width:25px;text-align:center;font-size:10px;color:#000;transform:scaleX(0.84)">1/70</div>
<div style="position:absolute;left:638px;top:477px;width:9px;height:13px;background:#d9d9d9;border-top:1px solid #c8c8c8;border-left:1px solid #f6f6f6;border-bottom:1px solid #c4c4c4;box-sizing:border-box"></div>
<div style="position:absolute;left:647px;top:477px;width:1px;height:13px;background:#505050"></div>
<svg style="position:absolute;left:638px;top:477px" width="9" height="13"><path d="M5.8 4.7L3.3 7.0L5.8 9.3z" fill="#000"/></svg>
<div style="position:absolute;left:648px;top:477px;width:9px;height:13px;background:#d9d9d9;border-top:1px solid #c8c8c8;border-left:1px solid #f6f6f6;border-bottom:1px solid #c4c4c4;box-sizing:border-box"></div>
<div style="position:absolute;left:657px;top:477px;width:1px;height:13px;background:#505050"></div>
<svg style="position:absolute;left:648px;top:477px" width="9" height="13"><path d="M3.7 4.7L6.2 7.0L3.7 9.3z" fill="#000"/></svg>
<div style="position:absolute;left:613px;top:490px;width:25px;height:12px;background:#fff;border-top:1.5px solid #484848;border-left:2px solid #505050;border-bottom:1px solid #e4e4e4;box-sizing:border-box"></div>
<div class="t" style="left:613.5px;top:491.5px;width:25px;text-align:center;font-size:10px;color:#000;transform:scaleX(0.84)">1/20</div>
<div style="position:absolute;left:638px;top:490px;width:9px;height:12px;background:#d9d9d9;border-top:1px solid #c8c8c8;border-left:1px solid #f6f6f6;border-bottom:1px solid #c4c4c4;box-sizing:border-box"></div>
<div style="position:absolute;left:647px;top:490px;width:1px;height:12px;background:#505050"></div>
<svg style="position:absolute;left:638px;top:490px" width="9" height="12"><path d="M5.8 4.2L3.3 6.5L5.8 8.8z" fill="#000"/></svg>
<div style="position:absolute;left:648px;top:490px;width:9px;height:12px;background:#d9d9d9;border-top:1px solid #c8c8c8;border-left:1px solid #f6f6f6;border-bottom:1px solid #c4c4c4;box-sizing:border-box"></div>
<div style="position:absolute;left:657px;top:490px;width:1px;height:12px;background:#505050"></div>
<svg style="position:absolute;left:648px;top:490px" width="9" height="12"><path d="M3.7 4.2L6.2 6.5L3.7 8.8z" fill="#000"/></svg>
<div style="position:absolute;left:638px;top:502px;width:20px;height:1px;background:#505050"></div>
<div class="t" style="left:513px;top:502.5px;font-size:7.6px;font-weight:bold;color:#111;letter-spacing:-0.2px">Freq</div>
<div class="t" style="left:571px;top:502.5px;font-size:7.6px;font-weight:bold;color:#111;letter-spacing:-0.35px">Gain</div>
<div class="t" style="left:624px;top:502.5px;font-size:7.6px;font-weight:bold;color:#111;">Q</div>
<div style="position:absolute;left:670px;top:340px;width:167px;height:129px;border:1px solid #8a8a8a;box-sizing:border-box"></div>
<div style="position:absolute;left:671px;top:341px;width:167px;height:129px;border:1px solid #fff;box-sizing:border-box"></div>
<div class="t" style="left:677px;top:349.5px;font-size:8.5px;font-weight:normal;color:#000;">Num notch automatic</div>
<div style="position:absolute;left:760px;top:348px;width:13px;height:10.5px;background:#d9d9d9;border-top:1px solid #fff;border-left:1px solid #fff;border-right:1px solid #404040;border-bottom:1px solid #404040;box-sizing:border-box"><div style="position:absolute;left:0;top:0;right:0;bottom:0;border-right:1px solid #8c8c8c;border-bottom:1px solid #8c8c8c"></div></div>
<svg style="position:absolute;left:760px;top:348px" width="13" height="10"><path d="M7.3 2.5L4.8 5L7.3 7.5z" fill="#000"/></svg>
<div style="position:absolute;left:773px;top:348px;width:13px;height:10.5px;background:#d9d9d9;border-top:1px solid #fff;border-left:1px solid #fff;border-right:1px solid #404040;border-bottom:1px solid #404040;box-sizing:border-box"><div style="position:absolute;left:0;top:0;right:0;bottom:0;border-right:1px solid #8c8c8c;border-bottom:1px solid #8c8c8c"></div></div>
<svg style="position:absolute;left:773px;top:348px" width="13" height="10"><path d="M5.2 2.5L7.7 5L5.2 7.5z" fill="#000"/></svg>
<div class="t" style="left:778px;top:348.8px;width:60px;text-align:center;font-size:9.5px;font-weight:bold">8</div>
<div class="t" style="left:677px;top:368.75px;font-size:8.5px;font-weight:normal;color:#000;">Q notch automatic</div>
<div style="position:absolute;left:760px;top:368px;width:13px;height:10.5px;background:#d9d9d9;border-top:1px solid #fff;border-left:1px solid #fff;border-right:1px solid #404040;border-bottom:1px solid #404040;box-sizing:border-box"><div style="position:absolute;left:0;top:0;right:0;bottom:0;border-right:1px solid #8c8c8c;border-bottom:1px solid #8c8c8c"></div></div>
<svg style="position:absolute;left:760px;top:368px" width="13" height="10"><path d="M7.3 2.5L4.8 5L7.3 7.5z" fill="#000"/></svg>
<div style="position:absolute;left:773px;top:368px;width:13px;height:10.5px;background:#d9d9d9;border-top:1px solid #fff;border-left:1px solid #fff;border-right:1px solid #404040;border-bottom:1px solid #404040;box-sizing:border-box"><div style="position:absolute;left:0;top:0;right:0;bottom:0;border-right:1px solid #8c8c8c;border-bottom:1px solid #8c8c8c"></div></div>
<svg style="position:absolute;left:773px;top:368px" width="13" height="10"><path d="M5.2 2.5L7.7 5L5.2 7.5z" fill="#000"/></svg>
<div class="t" style="left:778px;top:368.05px;width:60px;text-align:center;font-size:9.5px;font-weight:bold">1/70</div>
<div class="t" style="left:677px;top:388.0px;font-size:8.5px;font-weight:normal;color:#000;">Attenuation notch</div>
<div style="position:absolute;left:760px;top:387px;width:13px;height:10.5px;background:#d9d9d9;border-top:1px solid #fff;border-left:1px solid #fff;border-right:1px solid #404040;border-bottom:1px solid #404040;box-sizing:border-box"><div style="position:absolute;left:0;top:0;right:0;bottom:0;border-right:1px solid #8c8c8c;border-bottom:1px solid #8c8c8c"></div></div>
<svg style="position:absolute;left:760px;top:387px" width="13" height="10"><path d="M7.3 2.5L4.8 5L7.3 7.5z" fill="#000"/></svg>
<div style="position:absolute;left:773px;top:387px;width:13px;height:10.5px;background:#d9d9d9;border-top:1px solid #fff;border-left:1px solid #fff;border-right:1px solid #404040;border-bottom:1px solid #404040;box-sizing:border-box"><div style="position:absolute;left:0;top:0;right:0;bottom:0;border-right:1px solid #8c8c8c;border-bottom:1px solid #8c8c8c"></div></div>
<svg style="position:absolute;left:773px;top:387px" width="13" height="10"><path d="M5.2 2.5L7.7 5L5.2 7.5z" fill="#000"/></svg>
<div class="t" style="left:781px;top:387.3px;width:60px;text-align:center;font-size:9.5px;font-weight:bold">Variable</div>
<div class="t" style="left:677px;top:407.25px;font-size:8.5px;font-weight:normal;color:#000;">Release notch</div>
<div style="position:absolute;left:760px;top:406px;width:13px;height:10.5px;background:#d9d9d9;border-top:1px solid #fff;border-left:1px solid #fff;border-right:1px solid #404040;border-bottom:1px solid #404040;box-sizing:border-box"><div style="position:absolute;left:0;top:0;right:0;bottom:0;border-right:1px solid #8c8c8c;border-bottom:1px solid #8c8c8c"></div></div>
<svg style="position:absolute;left:760px;top:406px" width="13" height="10"><path d="M7.3 2.5L4.8 5L7.3 7.5z" fill="#000"/></svg>
<div style="position:absolute;left:773px;top:406px;width:13px;height:10.5px;background:#d9d9d9;border-top:1px solid #fff;border-left:1px solid #fff;border-right:1px solid #404040;border-bottom:1px solid #404040;box-sizing:border-box"><div style="position:absolute;left:0;top:0;right:0;bottom:0;border-right:1px solid #8c8c8c;border-bottom:1px solid #8c8c8c"></div></div>
<svg style="position:absolute;left:773px;top:406px" width="13" height="10"><path d="M5.2 2.5L7.7 5L5.2 7.5z" fill="#000"/></svg>
<div class="t" style="left:778px;top:406.55px;width:60px;text-align:center;font-size:9.5px;font-weight:bold">Fast</div>
<div class="t" style="left:677px;top:426.5px;font-size:8.5px;font-weight:normal;color:#000;">Mode search</div>
<div style="position:absolute;left:760px;top:426px;width:13px;height:10.5px;background:#d9d9d9;border-top:1px solid #fff;border-left:1px solid #fff;border-right:1px solid #404040;border-bottom:1px solid #404040;box-sizing:border-box"><div style="position:absolute;left:0;top:0;right:0;bottom:0;border-right:1px solid #8c8c8c;border-bottom:1px solid #8c8c8c"></div></div>
<svg style="position:absolute;left:760px;top:426px" width="13" height="10"><path d="M7.3 2.5L4.8 5L7.3 7.5z" fill="#000"/></svg>
<div style="position:absolute;left:773px;top:426px;width:13px;height:10.5px;background:#d9d9d9;border-top:1px solid #fff;border-left:1px solid #fff;border-right:1px solid #404040;border-bottom:1px solid #404040;box-sizing:border-box"><div style="position:absolute;left:0;top:0;right:0;bottom:0;border-right:1px solid #8c8c8c;border-bottom:1px solid #8c8c8c"></div></div>
<svg style="position:absolute;left:773px;top:426px" width="13" height="10"><path d="M5.2 2.5L7.7 5L5.2 7.5z" fill="#000"/></svg>
<div class="t" style="left:781px;top:425.8px;width:60px;text-align:center;font-size:9.5px;font-weight:bold">Fast</div>
<div class="t" style="left:677px;top:445px;font-size:8.5px;font-weight:normal;color:#000;">Sensitivity</div>
<div style="position:absolute;left:726px;top:446px;width:31px;height:2px;background:#606060"></div>
<div style="position:absolute;left:760px;top:446px;width:34px;height:2px;background:#606060"></div>
<div style="position:absolute;left:726px;top:448px;width:31px;height:1px;background:#f4f4f4"></div>
<div style="position:absolute;left:760px;top:448px;width:34px;height:1px;background:#f4f4f4"></div>
<div style="position:absolute;left:726px;top:446px;width:1px;height:3px;background:#505050"></div>
<svg style="position:absolute;left:720px;top:439px" width="80" height="20"><path d="M38.5 7v4.5q0 1.5-1.5 2" fill="none" stroke="#404040" stroke-width="1.1"/><rect x="11.4" y="15.5" width="1" height="2" fill="#000"/><rect x="15.8" y="15.5" width="1" height="2" fill="#000"/><rect x="20.2" y="15.5" width="1" height="2" fill="#000"/><rect x="24.6" y="15.5" width="1" height="2" fill="#000"/><rect x="29.0" y="15.5" width="1" height="2" fill="#000"/><rect x="33.4" y="15.5" width="1" height="2" fill="#000"/><rect x="37.8" y="15.5" width="1" height="2" fill="#000"/><rect x="42.2" y="15.5" width="1" height="2" fill="#000"/><rect x="46.6" y="15.5" width="1" height="2" fill="#000"/><rect x="51.0" y="15.5" width="1" height="2" fill="#000"/><rect x="55.4" y="15.5" width="1" height="2" fill="#000"/><rect x="59.8" y="15.5" width="1" height="2" fill="#000"/><rect x="64.2" y="15.5" width="1" height="2" fill="#000"/><rect x="68.6" y="15.5" width="1" height="2" fill="#000"/><path d="M5 16.5l2-1.5l2 1.5l-2 1.5z" fill="#000"/><rect x="73" y="15" width="1.3" height="3" fill="#000"/></svg>
<div style="position:absolute;left:798px;top:445px;width:33px;height:12px;background:#fff"></div>
<div class="t" style="left:798px;top:446.5px;width:33px;text-align:center;font-size:9px">8</div>
<div style="position:absolute;left:670px;top:476px;width:167px;height:39px;border:1px solid #8a8a8a;box-sizing:border-box"></div>
<div style="position:absolute;left:671px;top:477px;width:167px;height:39px;border:1px solid #fff;box-sizing:border-box"></div>
<div style="position:absolute;left:676px;top:482px;width:71.5px;height:26.5px;background:#d9d9d9;border-top:1px solid #fff;border-left:1px solid #fff;border-right:1px solid #404040;border-bottom:1px solid #404040;box-sizing:border-box"><div style="position:absolute;left:0;top:0;right:0;bottom:0;border-right:1px solid #8c8c8c;border-bottom:1px solid #8c8c8c"></div></div>
<div class="t" style="left:676px;top:485.5px;width:71.5px;text-align:center;font-size:8.5px;line-height:10.5px">Reset Notch<br>Manual</div>
<div style="position:absolute;left:760px;top:482px;width:71.5px;height:26.5px;background:#d9d9d9;border-top:1px solid #fff;border-left:1px solid #fff;border-right:1px solid #404040;border-bottom:1px solid #404040;box-sizing:border-box"><div style="position:absolute;left:0;top:0;right:0;bottom:0;border-right:1px solid #8c8c8c;border-bottom:1px solid #8c8c8c"></div></div>
<div class="t" style="left:760px;top:485.5px;width:71.5px;text-align:center;font-size:8.5px;line-height:10.5px">Reset Notch<br>Automatic</div>
<div style="position:absolute;left:984px;top:17px;width:42px;height:13px;background:#fafaf2;border:1px solid #000;border-bottom-width:1.5px;box-sizing:border-box"></div>
<div class="t" style="left:985.6px;top:19.6px;font-size:8.6px;font-weight:normal;color:#000;letter-spacing:-0.25px">Schließen</div>
</body></html>
